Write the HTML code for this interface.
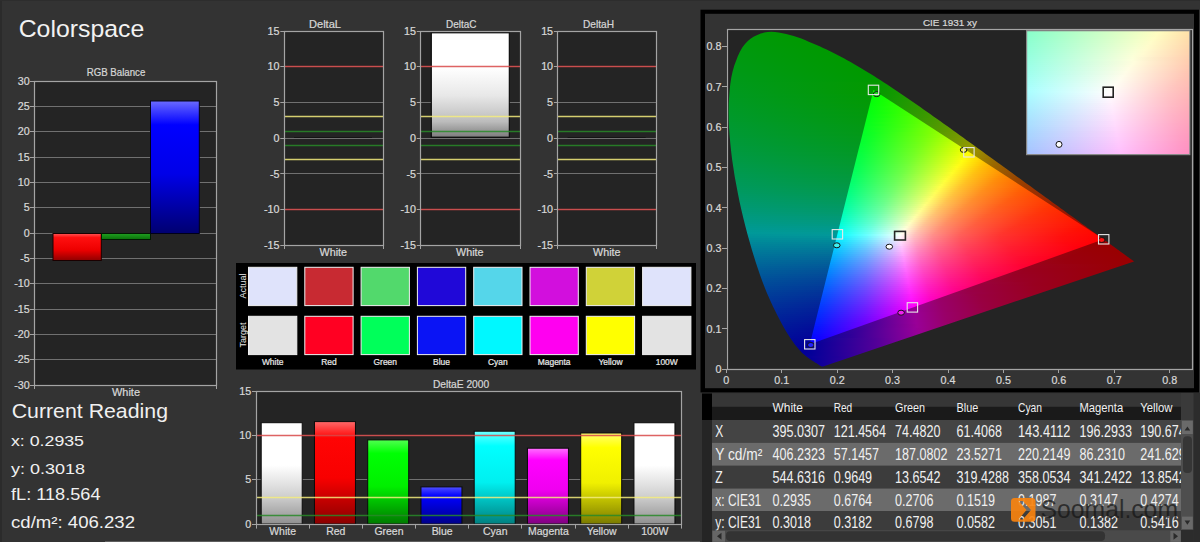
<!DOCTYPE html>
<html><head><meta charset="utf-8"><style>
html,body{margin:0;padding:0;background:#333333;width:1200px;height:542px;overflow:hidden;}
svg{position:absolute;left:0;top:0;font-family:"Liberation Sans", sans-serif;}
text{stroke:currentColor;stroke-width:0;}
.b text.s{stroke-width:0.22px;}
.g{position:absolute;}
.g i{position:absolute;display:block;}
</style></head><body>
<svg class="b" width="1200" height="542" viewBox="0 0 1200 542">
<rect x="0.00" y="0.00" width="2.00" height="542.00" fill="#2b2b2b" />
<rect x="0.00" y="0.00" width="1200.00" height="1.00" fill="#2d2d2d" />
<rect x="105.00" y="541.00" width="595.00" height="1.00" fill="#5e5e5e" />
<text x="18.70" y="37.30" font-size="24.71" fill="#f2f2f2" color="#f2f2f2" text-anchor="start" textLength="125.60" lengthAdjust="spacingAndGlyphs" >Colorspace</text>
<text class="s" x="86.70" y="76.30" font-size="10.17" fill="#d6d6d6" color="#d6d6d6" text-anchor="start" textLength="58.60" lengthAdjust="spacingAndGlyphs" >RGB Balance</text>
<rect x="34.50" y="81.00" width="182.00" height="304.00" fill="#242424" />
<line x1="30.00" y1="81.50" x2="34.50" y2="81.50" stroke="#a4a4a4" stroke-width="1" />
<text class="s" x="29.70" y="84.70" font-size="10.76" fill="#d8d8d8" color="#d8d8d8" text-anchor="end" >30</text>
<line x1="34.50" y1="106.50" x2="216.50" y2="106.50" stroke="#707070" stroke-width="1" />
<line x1="30.00" y1="106.50" x2="34.50" y2="106.50" stroke="#a4a4a4" stroke-width="1" />
<text class="s" x="29.70" y="110.03" font-size="10.76" fill="#d8d8d8" color="#d8d8d8" text-anchor="end" >25</text>
<line x1="34.50" y1="131.50" x2="216.50" y2="131.50" stroke="#707070" stroke-width="1" />
<line x1="30.00" y1="131.50" x2="34.50" y2="131.50" stroke="#a4a4a4" stroke-width="1" />
<text class="s" x="29.70" y="135.37" font-size="10.76" fill="#d8d8d8" color="#d8d8d8" text-anchor="end" >20</text>
<line x1="34.50" y1="157.50" x2="216.50" y2="157.50" stroke="#707070" stroke-width="1" />
<line x1="30.00" y1="157.50" x2="34.50" y2="157.50" stroke="#a4a4a4" stroke-width="1" />
<text class="s" x="29.70" y="160.70" font-size="10.76" fill="#d8d8d8" color="#d8d8d8" text-anchor="end" >15</text>
<line x1="34.50" y1="182.50" x2="216.50" y2="182.50" stroke="#707070" stroke-width="1" />
<line x1="30.00" y1="182.50" x2="34.50" y2="182.50" stroke="#a4a4a4" stroke-width="1" />
<text class="s" x="29.70" y="186.03" font-size="10.76" fill="#d8d8d8" color="#d8d8d8" text-anchor="end" >10</text>
<line x1="34.50" y1="207.50" x2="216.50" y2="207.50" stroke="#707070" stroke-width="1" />
<line x1="30.00" y1="207.50" x2="34.50" y2="207.50" stroke="#a4a4a4" stroke-width="1" />
<text class="s" x="29.70" y="211.37" font-size="10.76" fill="#d8d8d8" color="#d8d8d8" text-anchor="end" >5</text>
<line x1="34.50" y1="233.50" x2="216.50" y2="233.50" stroke="#707070" stroke-width="1" />
<line x1="30.00" y1="233.50" x2="34.50" y2="233.50" stroke="#a4a4a4" stroke-width="1" />
<text class="s" x="29.70" y="236.70" font-size="10.76" fill="#d8d8d8" color="#d8d8d8" text-anchor="end" >0</text>
<line x1="34.50" y1="258.50" x2="216.50" y2="258.50" stroke="#707070" stroke-width="1" />
<line x1="30.00" y1="258.50" x2="34.50" y2="258.50" stroke="#a4a4a4" stroke-width="1" />
<text class="s" x="29.70" y="262.03" font-size="10.76" fill="#d8d8d8" color="#d8d8d8" text-anchor="end" >-5</text>
<line x1="34.50" y1="283.50" x2="216.50" y2="283.50" stroke="#707070" stroke-width="1" />
<line x1="30.00" y1="283.50" x2="34.50" y2="283.50" stroke="#a4a4a4" stroke-width="1" />
<text class="s" x="29.70" y="287.37" font-size="10.76" fill="#d8d8d8" color="#d8d8d8" text-anchor="end" >-10</text>
<line x1="34.50" y1="309.50" x2="216.50" y2="309.50" stroke="#707070" stroke-width="1" />
<line x1="30.00" y1="309.50" x2="34.50" y2="309.50" stroke="#a4a4a4" stroke-width="1" />
<text class="s" x="29.70" y="312.70" font-size="10.76" fill="#d8d8d8" color="#d8d8d8" text-anchor="end" >-15</text>
<line x1="34.50" y1="334.50" x2="216.50" y2="334.50" stroke="#707070" stroke-width="1" />
<line x1="30.00" y1="334.50" x2="34.50" y2="334.50" stroke="#a4a4a4" stroke-width="1" />
<text class="s" x="29.70" y="338.03" font-size="10.76" fill="#d8d8d8" color="#d8d8d8" text-anchor="end" >-20</text>
<line x1="34.50" y1="359.50" x2="216.50" y2="359.50" stroke="#707070" stroke-width="1" />
<line x1="30.00" y1="359.50" x2="34.50" y2="359.50" stroke="#a4a4a4" stroke-width="1" />
<text class="s" x="29.70" y="363.37" font-size="10.76" fill="#d8d8d8" color="#d8d8d8" text-anchor="end" >-25</text>
<line x1="30.00" y1="385.50" x2="34.50" y2="385.50" stroke="#a4a4a4" stroke-width="1" />
<text class="s" x="29.70" y="388.70" font-size="10.76" fill="#d8d8d8" color="#d8d8d8" text-anchor="end" >-30</text>
<linearGradient id="gR" x1="0" y1="0" x2="0" y2="1"><stop offset="0" stop-color="#ff5555"/><stop offset="0.15" stop-color="#ff1010"/><stop offset="0.6" stop-color="#ee0000"/><stop offset="1" stop-color="#900000"/></linearGradient>
<linearGradient id="gG" x1="0" y1="0" x2="0" y2="1"><stop offset="0" stop-color="#20a020"/><stop offset="1" stop-color="#0a700a"/></linearGradient>
<linearGradient id="gB" x1="0" y1="0" x2="0" y2="1"><stop offset="0" stop-color="#6a6aff"/><stop offset="0.18" stop-color="#0000ff"/><stop offset="0.55" stop-color="#0000e8"/><stop offset="1" stop-color="#000070"/></linearGradient>
<rect x="53.00" y="233.50" width="48.30" height="27.00" fill="url(#gR)" stroke="#1a0000" stroke-width="1"/>
<rect x="101.50" y="233.50" width="49.00" height="6.00" fill="url(#gG)" stroke="#001a00" stroke-width="1"/>
<rect x="150.50" y="101.00" width="48.80" height="132.50" fill="url(#gB)" stroke="#00001a" stroke-width="1"/>
<rect x="34.5" y="81.5" width="182.0" height="304.0" fill="none" stroke="#a4a4a4" stroke-width="1.2"/>
<line x1="34.50" y1="385.00" x2="34.50" y2="389.00" stroke="#a4a4a4" stroke-width="1" />
<line x1="216.50" y1="385.00" x2="216.50" y2="389.00" stroke="#a4a4a4" stroke-width="1" />
<text class="s" x="112.00" y="395.50" font-size="10.90" fill="#d8d8d8" color="#d8d8d8" text-anchor="start" textLength="28.00" lengthAdjust="spacingAndGlyphs" >White</text>
<text x="11.70" y="418.25" font-size="19.62" fill="#f0f0f0" color="#f0f0f0" text-anchor="start" textLength="156.30" lengthAdjust="spacingAndGlyphs" >Current Reading</text>
<text x="11.00" y="446.00" font-size="15.26" fill="#f0f0f0" color="#f0f0f0" text-anchor="start" textLength="73.00" lengthAdjust="spacingAndGlyphs" >x: 0.2935</text>
<text x="11.00" y="473.75" font-size="15.26" fill="#f0f0f0" color="#f0f0f0" text-anchor="start" textLength="74.00" lengthAdjust="spacingAndGlyphs" >y: 0.3018</text>
<text x="11.00" y="500.00" font-size="15.70" fill="#f0f0f0" color="#f0f0f0" text-anchor="start" textLength="89.50" lengthAdjust="spacingAndGlyphs" >fL: 118.564</text>
<text x="11.00" y="527.75" font-size="15.70" fill="#f0f0f0" color="#f0f0f0" text-anchor="start" textLength="124.00" lengthAdjust="spacingAndGlyphs" >cd/m²: 406.232</text>
<rect x="284.30" y="31.00" width="98.70" height="214.40" fill="#242424" />
<line x1="280.30" y1="31.50" x2="284.30" y2="31.50" stroke="#a4a4a4" stroke-width="1" />
<text class="s" x="279.50" y="34.70" font-size="10.76" fill="#d8d8d8" color="#d8d8d8" text-anchor="end" >15</text>
<line x1="284.30" y1="66.50" x2="383.00" y2="66.50" stroke="#707070" stroke-width="1" />
<line x1="280.30" y1="66.50" x2="284.30" y2="66.50" stroke="#a4a4a4" stroke-width="1" />
<text class="s" x="279.50" y="70.43" font-size="10.76" fill="#d8d8d8" color="#d8d8d8" text-anchor="end" >10</text>
<line x1="284.30" y1="102.50" x2="383.00" y2="102.50" stroke="#707070" stroke-width="1" />
<line x1="280.30" y1="102.50" x2="284.30" y2="102.50" stroke="#a4a4a4" stroke-width="1" />
<text class="s" x="279.50" y="106.17" font-size="10.76" fill="#d8d8d8" color="#d8d8d8" text-anchor="end" >5</text>
<line x1="284.30" y1="138.50" x2="383.00" y2="138.50" stroke="#707070" stroke-width="1" />
<line x1="280.30" y1="138.50" x2="284.30" y2="138.50" stroke="#a4a4a4" stroke-width="1" />
<text class="s" x="279.50" y="141.90" font-size="10.76" fill="#d8d8d8" color="#d8d8d8" text-anchor="end" >0</text>
<line x1="284.30" y1="173.50" x2="383.00" y2="173.50" stroke="#707070" stroke-width="1" />
<line x1="280.30" y1="173.50" x2="284.30" y2="173.50" stroke="#a4a4a4" stroke-width="1" />
<text class="s" x="279.50" y="177.63" font-size="10.76" fill="#d8d8d8" color="#d8d8d8" text-anchor="end" >-5</text>
<line x1="284.30" y1="209.50" x2="383.00" y2="209.50" stroke="#707070" stroke-width="1" />
<line x1="280.30" y1="209.50" x2="284.30" y2="209.50" stroke="#a4a4a4" stroke-width="1" />
<text class="s" x="279.50" y="213.37" font-size="10.76" fill="#d8d8d8" color="#d8d8d8" text-anchor="end" >-10</text>
<line x1="280.30" y1="245.50" x2="284.30" y2="245.50" stroke="#a4a4a4" stroke-width="1" />
<text class="s" x="279.50" y="249.10" font-size="10.76" fill="#d8d8d8" color="#d8d8d8" text-anchor="end" >-15</text>
<text class="s" x="309.00" y="27.70" font-size="10.17" fill="#d6d6d6" color="#d6d6d6" text-anchor="start" textLength="32.00" lengthAdjust="spacingAndGlyphs" >DeltaL</text>
<text class="s" x="319.50" y="255.50" font-size="10.47" fill="#d8d8d8" color="#d8d8d8" text-anchor="start" textLength="27.50" lengthAdjust="spacingAndGlyphs" >White</text>
<line x1="294.00" y1="137.50" x2="372.00" y2="137.50" stroke="#141414" stroke-width="1" />
<line x1="284.30" y1="66.50" x2="383.00" y2="66.50" stroke="#d84848" stroke-width="1.3" stroke-opacity="0.85"/>
<line x1="284.30" y1="209.50" x2="383.00" y2="209.50" stroke="#d84848" stroke-width="1.3" stroke-opacity="0.85"/>
<line x1="284.30" y1="116.50" x2="383.00" y2="116.50" stroke="#f4ec7c" stroke-width="1.3" stroke-opacity="0.85"/>
<line x1="284.30" y1="159.50" x2="383.00" y2="159.50" stroke="#f4ec7c" stroke-width="1.3" stroke-opacity="0.85"/>
<line x1="284.30" y1="131.50" x2="383.00" y2="131.50" stroke="#288a28" stroke-width="1.3" stroke-opacity="0.85"/>
<line x1="284.30" y1="145.50" x2="383.00" y2="145.50" stroke="#288a28" stroke-width="1.3" stroke-opacity="0.85"/>
<rect x="284.5" y="31.5" width="99.0" height="214.0" fill="none" stroke="#a4a4a4" stroke-width="1.2"/>
<line x1="284.50" y1="245.40" x2="284.50" y2="249.00" stroke="#a4a4a4" stroke-width="1" />
<line x1="383.50" y1="245.40" x2="383.50" y2="249.00" stroke="#a4a4a4" stroke-width="1" />
<rect x="420.80" y="31.00" width="99.20" height="214.40" fill="#242424" />
<line x1="416.80" y1="31.50" x2="420.80" y2="31.50" stroke="#a4a4a4" stroke-width="1" />
<text class="s" x="416.00" y="34.70" font-size="10.76" fill="#d8d8d8" color="#d8d8d8" text-anchor="end" >15</text>
<line x1="420.80" y1="66.50" x2="520.00" y2="66.50" stroke="#707070" stroke-width="1" />
<line x1="416.80" y1="66.50" x2="420.80" y2="66.50" stroke="#a4a4a4" stroke-width="1" />
<text class="s" x="416.00" y="70.43" font-size="10.76" fill="#d8d8d8" color="#d8d8d8" text-anchor="end" >10</text>
<line x1="420.80" y1="102.50" x2="520.00" y2="102.50" stroke="#707070" stroke-width="1" />
<line x1="416.80" y1="102.50" x2="420.80" y2="102.50" stroke="#a4a4a4" stroke-width="1" />
<text class="s" x="416.00" y="106.17" font-size="10.76" fill="#d8d8d8" color="#d8d8d8" text-anchor="end" >5</text>
<line x1="420.80" y1="138.50" x2="520.00" y2="138.50" stroke="#707070" stroke-width="1" />
<line x1="416.80" y1="138.50" x2="420.80" y2="138.50" stroke="#a4a4a4" stroke-width="1" />
<text class="s" x="416.00" y="141.90" font-size="10.76" fill="#d8d8d8" color="#d8d8d8" text-anchor="end" >0</text>
<line x1="420.80" y1="173.50" x2="520.00" y2="173.50" stroke="#707070" stroke-width="1" />
<line x1="416.80" y1="173.50" x2="420.80" y2="173.50" stroke="#a4a4a4" stroke-width="1" />
<text class="s" x="416.00" y="177.63" font-size="10.76" fill="#d8d8d8" color="#d8d8d8" text-anchor="end" >-5</text>
<line x1="420.80" y1="209.50" x2="520.00" y2="209.50" stroke="#707070" stroke-width="1" />
<line x1="416.80" y1="209.50" x2="420.80" y2="209.50" stroke="#a4a4a4" stroke-width="1" />
<text class="s" x="416.00" y="213.37" font-size="10.76" fill="#d8d8d8" color="#d8d8d8" text-anchor="end" >-10</text>
<line x1="416.80" y1="245.50" x2="420.80" y2="245.50" stroke="#a4a4a4" stroke-width="1" />
<text class="s" x="416.00" y="249.10" font-size="10.76" fill="#d8d8d8" color="#d8d8d8" text-anchor="end" >-15</text>
<text class="s" x="446.00" y="27.70" font-size="10.17" fill="#d6d6d6" color="#d6d6d6" text-anchor="start" textLength="30.40" lengthAdjust="spacingAndGlyphs" >DeltaC</text>
<text class="s" x="456.00" y="255.50" font-size="10.47" fill="#d8d8d8" color="#d8d8d8" text-anchor="start" textLength="27.50" lengthAdjust="spacingAndGlyphs" >White</text>
<linearGradient id="gW" x1="0" y1="0" x2="0" y2="1"><stop offset="0" stop-color="#ffffff"/><stop offset="0.33" stop-color="#ffffff"/><stop offset="0.6" stop-color="#e8e8e8"/><stop offset="0.85" stop-color="#bcbcbc"/><stop offset="1" stop-color="#7c7c7c"/></linearGradient>
<rect x="431.30" y="32.80" width="78.00" height="104.40" fill="url(#gW)" stroke="#050505" stroke-width="1.1"/>
<line x1="420.80" y1="66.50" x2="520.00" y2="66.50" stroke="#d84848" stroke-width="1.3" stroke-opacity="0.85"/>
<line x1="420.80" y1="209.50" x2="520.00" y2="209.50" stroke="#d84848" stroke-width="1.3" stroke-opacity="0.85"/>
<line x1="420.80" y1="116.50" x2="520.00" y2="116.50" stroke="#f4ec7c" stroke-width="1.3" stroke-opacity="0.85"/>
<line x1="420.80" y1="159.50" x2="520.00" y2="159.50" stroke="#f4ec7c" stroke-width="1.3" stroke-opacity="0.85"/>
<line x1="420.80" y1="131.50" x2="520.00" y2="131.50" stroke="#288a28" stroke-width="1.3" stroke-opacity="0.85"/>
<line x1="420.80" y1="145.50" x2="520.00" y2="145.50" stroke="#288a28" stroke-width="1.3" stroke-opacity="0.85"/>
<rect x="420.5" y="31.5" width="100.0" height="214.0" fill="none" stroke="#a4a4a4" stroke-width="1.2"/>
<line x1="420.50" y1="245.40" x2="420.50" y2="249.00" stroke="#a4a4a4" stroke-width="1" />
<line x1="520.50" y1="245.40" x2="520.50" y2="249.00" stroke="#a4a4a4" stroke-width="1" />
<rect x="557.90" y="31.00" width="98.90" height="214.40" fill="#242424" />
<line x1="553.90" y1="31.50" x2="557.90" y2="31.50" stroke="#a4a4a4" stroke-width="1" />
<text class="s" x="553.10" y="34.70" font-size="10.76" fill="#d8d8d8" color="#d8d8d8" text-anchor="end" >15</text>
<line x1="557.90" y1="66.50" x2="656.80" y2="66.50" stroke="#707070" stroke-width="1" />
<line x1="553.90" y1="66.50" x2="557.90" y2="66.50" stroke="#a4a4a4" stroke-width="1" />
<text class="s" x="553.10" y="70.43" font-size="10.76" fill="#d8d8d8" color="#d8d8d8" text-anchor="end" >10</text>
<line x1="557.90" y1="102.50" x2="656.80" y2="102.50" stroke="#707070" stroke-width="1" />
<line x1="553.90" y1="102.50" x2="557.90" y2="102.50" stroke="#a4a4a4" stroke-width="1" />
<text class="s" x="553.10" y="106.17" font-size="10.76" fill="#d8d8d8" color="#d8d8d8" text-anchor="end" >5</text>
<line x1="557.90" y1="138.50" x2="656.80" y2="138.50" stroke="#707070" stroke-width="1" />
<line x1="553.90" y1="138.50" x2="557.90" y2="138.50" stroke="#a4a4a4" stroke-width="1" />
<text class="s" x="553.10" y="141.90" font-size="10.76" fill="#d8d8d8" color="#d8d8d8" text-anchor="end" >0</text>
<line x1="557.90" y1="173.50" x2="656.80" y2="173.50" stroke="#707070" stroke-width="1" />
<line x1="553.90" y1="173.50" x2="557.90" y2="173.50" stroke="#a4a4a4" stroke-width="1" />
<text class="s" x="553.10" y="177.63" font-size="10.76" fill="#d8d8d8" color="#d8d8d8" text-anchor="end" >-5</text>
<line x1="557.90" y1="209.50" x2="656.80" y2="209.50" stroke="#707070" stroke-width="1" />
<line x1="553.90" y1="209.50" x2="557.90" y2="209.50" stroke="#a4a4a4" stroke-width="1" />
<text class="s" x="553.10" y="213.37" font-size="10.76" fill="#d8d8d8" color="#d8d8d8" text-anchor="end" >-10</text>
<line x1="553.90" y1="245.50" x2="557.90" y2="245.50" stroke="#a4a4a4" stroke-width="1" />
<text class="s" x="553.10" y="249.10" font-size="10.76" fill="#d8d8d8" color="#d8d8d8" text-anchor="end" >-15</text>
<text class="s" x="583.00" y="27.70" font-size="10.17" fill="#d6d6d6" color="#d6d6d6" text-anchor="start" textLength="31.00" lengthAdjust="spacingAndGlyphs" >DeltaH</text>
<text class="s" x="593.00" y="255.50" font-size="10.47" fill="#d8d8d8" color="#d8d8d8" text-anchor="start" textLength="27.50" lengthAdjust="spacingAndGlyphs" >White</text>
<line x1="567.60" y1="137.50" x2="645.60" y2="137.50" stroke="#141414" stroke-width="1" />
<line x1="557.90" y1="66.50" x2="656.80" y2="66.50" stroke="#d84848" stroke-width="1.3" stroke-opacity="0.85"/>
<line x1="557.90" y1="209.50" x2="656.80" y2="209.50" stroke="#d84848" stroke-width="1.3" stroke-opacity="0.85"/>
<line x1="557.90" y1="116.50" x2="656.80" y2="116.50" stroke="#f4ec7c" stroke-width="1.3" stroke-opacity="0.85"/>
<line x1="557.90" y1="159.50" x2="656.80" y2="159.50" stroke="#f4ec7c" stroke-width="1.3" stroke-opacity="0.85"/>
<line x1="557.90" y1="131.50" x2="656.80" y2="131.50" stroke="#288a28" stroke-width="1.3" stroke-opacity="0.85"/>
<line x1="557.90" y1="145.50" x2="656.80" y2="145.50" stroke="#288a28" stroke-width="1.3" stroke-opacity="0.85"/>
<rect x="557.5" y="31.5" width="99.0" height="214.0" fill="none" stroke="#a4a4a4" stroke-width="1.2"/>
<line x1="557.50" y1="245.40" x2="557.50" y2="249.00" stroke="#a4a4a4" stroke-width="1" />
<line x1="656.50" y1="245.40" x2="656.50" y2="249.00" stroke="#a4a4a4" stroke-width="1" />
<rect x="236.00" y="263.00" width="460.00" height="106.50" fill="#000000" />
<rect x="248.50" y="267.30" width="48.30" height="38.30" fill="#dfe3fb" stroke="#f0f0f0" stroke-width="1"/>
<rect x="248.50" y="316.30" width="48.30" height="38.30" fill="#e3e3e3" stroke="#f0f0f0" stroke-width="1"/>
<text class="s" x="272.65" y="364.50" font-size="8.43" fill="#e8e8e8" color="#e8e8e8" text-anchor="middle" >White</text>
<rect x="304.80" y="267.30" width="48.30" height="38.30" fill="#c82a32" stroke="#f0f0f0" stroke-width="1"/>
<rect x="304.80" y="316.30" width="48.30" height="38.30" fill="#ff0022" stroke="#f0f0f0" stroke-width="1"/>
<text class="s" x="328.95" y="364.50" font-size="8.43" fill="#e8e8e8" color="#e8e8e8" text-anchor="middle" >Red</text>
<rect x="361.10" y="267.30" width="48.30" height="38.30" fill="#52d96c" stroke="#f0f0f0" stroke-width="1"/>
<rect x="361.10" y="316.30" width="48.30" height="38.30" fill="#00ff5a" stroke="#f0f0f0" stroke-width="1"/>
<text class="s" x="385.25" y="364.50" font-size="8.43" fill="#e8e8e8" color="#e8e8e8" text-anchor="middle" >Green</text>
<rect x="417.40" y="267.30" width="48.30" height="38.30" fill="#2008d8" stroke="#f0f0f0" stroke-width="1"/>
<rect x="417.40" y="316.30" width="48.30" height="38.30" fill="#0a14f5" stroke="#f0f0f0" stroke-width="1"/>
<text class="s" x="441.55" y="364.50" font-size="8.43" fill="#e8e8e8" color="#e8e8e8" text-anchor="middle" >Blue</text>
<rect x="473.70" y="267.30" width="48.30" height="38.30" fill="#55d6ea" stroke="#f0f0f0" stroke-width="1"/>
<rect x="473.70" y="316.30" width="48.30" height="38.30" fill="#00f8ff" stroke="#f0f0f0" stroke-width="1"/>
<text class="s" x="497.85" y="364.50" font-size="8.43" fill="#e8e8e8" color="#e8e8e8" text-anchor="middle" >Cyan</text>
<rect x="530.00" y="267.30" width="48.30" height="38.30" fill="#d20fdd" stroke="#f0f0f0" stroke-width="1"/>
<rect x="530.00" y="316.30" width="48.30" height="38.30" fill="#ff00f0" stroke="#f0f0f0" stroke-width="1"/>
<text class="s" x="554.15" y="364.50" font-size="8.43" fill="#e8e8e8" color="#e8e8e8" text-anchor="middle" >Magenta</text>
<rect x="586.30" y="267.30" width="48.30" height="38.30" fill="#d0d238" stroke="#f0f0f0" stroke-width="1"/>
<rect x="586.30" y="316.30" width="48.30" height="38.30" fill="#ffff00" stroke="#f0f0f0" stroke-width="1"/>
<text class="s" x="610.45" y="364.50" font-size="8.43" fill="#e8e8e8" color="#e8e8e8" text-anchor="middle" >Yellow</text>
<rect x="642.60" y="267.30" width="48.30" height="38.30" fill="#dfe3fb" stroke="#f0f0f0" stroke-width="1"/>
<rect x="642.60" y="316.30" width="48.30" height="38.30" fill="#e3e3e3" stroke="#f0f0f0" stroke-width="1"/>
<text class="s" x="666.75" y="364.50" font-size="8.43" fill="#e8e8e8" color="#e8e8e8" text-anchor="middle" >100W</text>
<text transform="translate(245.5,286) rotate(-90)" font-size="9" fill="#e8e8e8" text-anchor="middle">Actual</text>
<text transform="translate(245.5,335) rotate(-90)" font-size="9" fill="#e8e8e8" text-anchor="middle">Target</text>
<text class="s" x="432.90" y="387.80" font-size="10.17" fill="#d6d6d6" color="#d6d6d6" text-anchor="start" textLength="56.30" lengthAdjust="spacingAndGlyphs" >DeltaE 2000</text>
<rect x="256.00" y="391.30" width="425.40" height="132.70" fill="#242424" />
<line x1="252.00" y1="391.50" x2="256.00" y2="391.50" stroke="#a4a4a4" stroke-width="1" />
<text class="s" x="251.30" y="395.00" font-size="10.76" fill="#d8d8d8" color="#d8d8d8" text-anchor="end" >15</text>
<line x1="256.00" y1="435.50" x2="681.40" y2="435.50" stroke="#707070" stroke-width="1" />
<line x1="252.00" y1="435.50" x2="256.00" y2="435.50" stroke="#a4a4a4" stroke-width="1" />
<text class="s" x="251.30" y="439.23" font-size="10.76" fill="#d8d8d8" color="#d8d8d8" text-anchor="end" >10</text>
<line x1="256.00" y1="479.50" x2="681.40" y2="479.50" stroke="#707070" stroke-width="1" />
<line x1="252.00" y1="479.50" x2="256.00" y2="479.50" stroke="#a4a4a4" stroke-width="1" />
<text class="s" x="251.30" y="483.47" font-size="10.76" fill="#d8d8d8" color="#d8d8d8" text-anchor="end" >5</text>
<line x1="252.00" y1="524.50" x2="256.00" y2="524.50" stroke="#a4a4a4" stroke-width="1" />
<text class="s" x="251.30" y="527.70" font-size="10.76" fill="#d8d8d8" color="#d8d8d8" text-anchor="end" >0</text>
<linearGradient id="eW" x1="0" y1="0" x2="0" y2="1"><stop offset="0" stop-color="#ffffff"/><stop offset="0.42" stop-color="#ffffff"/><stop offset="0.72" stop-color="#d0d0d0"/><stop offset="1" stop-color="#909090"/></linearGradient>
<linearGradient id="eR" x1="0" y1="0" x2="0" y2="1"><stop offset="0" stop-color="#ff6a6a"/><stop offset="0.16" stop-color="#ff0404"/><stop offset="0.55" stop-color="#f80000"/><stop offset="1" stop-color="#8a0000"/></linearGradient>
<linearGradient id="eG" x1="0" y1="0" x2="0" y2="1"><stop offset="0" stop-color="#50ff50"/><stop offset="0.16" stop-color="#00ff04"/><stop offset="0.55" stop-color="#00f000"/><stop offset="1" stop-color="#007a00"/></linearGradient>
<linearGradient id="eB" x1="0" y1="0" x2="0" y2="1"><stop offset="0" stop-color="#5050ff"/><stop offset="0.25" stop-color="#0000ff"/><stop offset="1" stop-color="#000088"/></linearGradient>
<linearGradient id="eC" x1="0" y1="0" x2="0" y2="1"><stop offset="0" stop-color="#70ffff"/><stop offset="0.16" stop-color="#00ffff"/><stop offset="0.55" stop-color="#00f0f0"/><stop offset="1" stop-color="#008080"/></linearGradient>
<linearGradient id="eM" x1="0" y1="0" x2="0" y2="1"><stop offset="0" stop-color="#ff70ff"/><stop offset="0.16" stop-color="#ff00ff"/><stop offset="0.55" stop-color="#f000f0"/><stop offset="1" stop-color="#800080"/></linearGradient>
<linearGradient id="eY" x1="0" y1="0" x2="0" y2="1"><stop offset="0" stop-color="#ffff70"/><stop offset="0.16" stop-color="#ffff00"/><stop offset="0.55" stop-color="#f0f000"/><stop offset="1" stop-color="#7a7a00"/></linearGradient>
<rect x="261.20" y="422.70" width="41.00" height="101.30" fill="url(#eW)" stroke="#0a0a0a" stroke-width="1"/>
<text class="s" x="282.59" y="535.00" font-size="10.47" fill="#d8d8d8" color="#d8d8d8" text-anchor="middle" >White</text>
<rect x="314.45" y="421.60" width="41.00" height="102.40" fill="url(#eR)" stroke="#0a0a0a" stroke-width="1"/>
<text class="s" x="335.76" y="535.00" font-size="10.47" fill="#d8d8d8" color="#d8d8d8" text-anchor="middle" >Red</text>
<rect x="367.70" y="439.90" width="41.00" height="84.10" fill="url(#eG)" stroke="#0a0a0a" stroke-width="1"/>
<text class="s" x="388.94" y="535.00" font-size="10.47" fill="#d8d8d8" color="#d8d8d8" text-anchor="middle" >Green</text>
<rect x="420.95" y="486.90" width="41.00" height="37.10" fill="url(#eB)" stroke="#0a0a0a" stroke-width="1"/>
<text class="s" x="442.11" y="535.00" font-size="10.47" fill="#d8d8d8" color="#d8d8d8" text-anchor="middle" >Blue</text>
<rect x="474.20" y="431.20" width="41.00" height="92.80" fill="url(#eC)" stroke="#0a0a0a" stroke-width="1"/>
<text class="s" x="495.29" y="535.00" font-size="10.47" fill="#d8d8d8" color="#d8d8d8" text-anchor="middle" >Cyan</text>
<rect x="527.45" y="448.20" width="41.00" height="75.80" fill="url(#eM)" stroke="#0a0a0a" stroke-width="1"/>
<text class="s" x="548.46" y="535.00" font-size="10.47" fill="#d8d8d8" color="#d8d8d8" text-anchor="middle" >Magenta</text>
<rect x="580.70" y="433.00" width="41.00" height="91.00" fill="url(#eY)" stroke="#0a0a0a" stroke-width="1"/>
<text class="s" x="601.64" y="535.00" font-size="10.47" fill="#d8d8d8" color="#d8d8d8" text-anchor="middle" >Yellow</text>
<rect x="633.95" y="422.75" width="41.00" height="101.25" fill="url(#eW)" stroke="#0a0a0a" stroke-width="1"/>
<text class="s" x="654.81" y="535.00" font-size="10.47" fill="#d8d8d8" color="#d8d8d8" text-anchor="middle" >100W</text>
<line x1="256.00" y1="435.50" x2="681.40" y2="435.50" stroke="#d84848" stroke-width="1.3" stroke-opacity="0.85"/>
<line x1="256.00" y1="497.50" x2="681.40" y2="497.50" stroke="#f4ec7c" stroke-width="1.3" stroke-opacity="0.85"/>
<line x1="256.00" y1="515.50" x2="681.40" y2="515.50" stroke="#288a28" stroke-width="1.3" stroke-opacity="0.85"/>
<rect x="256.5" y="391.5" width="425.0" height="133.0" fill="none" stroke="#a4a4a4" stroke-width="1.2"/>
<line x1="256.50" y1="524.00" x2="256.50" y2="528.60" stroke="#a4a4a4" stroke-width="1" />
<line x1="309.50" y1="524.00" x2="309.50" y2="528.60" stroke="#a4a4a4" stroke-width="1" />
<line x1="362.50" y1="524.00" x2="362.50" y2="528.60" stroke="#a4a4a4" stroke-width="1" />
<line x1="415.50" y1="524.00" x2="415.50" y2="528.60" stroke="#a4a4a4" stroke-width="1" />
<line x1="468.50" y1="524.00" x2="468.50" y2="528.60" stroke="#a4a4a4" stroke-width="1" />
<line x1="521.50" y1="524.00" x2="521.50" y2="528.60" stroke="#a4a4a4" stroke-width="1" />
<line x1="575.50" y1="524.00" x2="575.50" y2="528.60" stroke="#a4a4a4" stroke-width="1" />
<line x1="628.50" y1="524.00" x2="628.50" y2="528.60" stroke="#a4a4a4" stroke-width="1" />
<line x1="681.50" y1="524.00" x2="681.50" y2="528.60" stroke="#a4a4a4" stroke-width="1" />
<rect x="700.50" y="9.70" width="498.50" height="382.70" fill="#000" />
<rect x="705.00" y="13.80" width="489.00" height="374.40" fill="#333333" />
<rect x="726.60" y="29.70" width="465.90" height="338.80" fill="#242424" />
<text class="s" x="922.90" y="26.25" font-size="9.74" fill="#d6d6d6" color="#d6d6d6" text-anchor="start" textLength="54.10" lengthAdjust="spacingAndGlyphs" >CIE 1931 xy</text>
<line x1="726.50" y1="369.00" x2="726.50" y2="373.00" stroke="#a4a4a4" stroke-width="1" />
<text class="s" x="726.30" y="383.70" font-size="10.76" fill="#d8d8d8" color="#d8d8d8" text-anchor="middle" >0</text>
<line x1="722.00" y1="369.50" x2="727.00" y2="369.50" stroke="#a4a4a4" stroke-width="1" />
<text class="s" x="721.50" y="372.90" font-size="10.76" fill="#d8d8d8" color="#d8d8d8" text-anchor="end" >0</text>
<line x1="781.50" y1="369.00" x2="781.50" y2="373.00" stroke="#a4a4a4" stroke-width="1" />
<text class="s" x="781.73" y="383.70" font-size="10.76" fill="#d8d8d8" color="#d8d8d8" text-anchor="middle" >0.1</text>
<line x1="722.00" y1="328.50" x2="727.00" y2="328.50" stroke="#a4a4a4" stroke-width="1" />
<text class="s" x="721.50" y="332.57" font-size="10.76" fill="#d8d8d8" color="#d8d8d8" text-anchor="end" >0.1</text>
<line x1="837.50" y1="369.00" x2="837.50" y2="373.00" stroke="#a4a4a4" stroke-width="1" />
<text class="s" x="837.16" y="383.70" font-size="10.76" fill="#d8d8d8" color="#d8d8d8" text-anchor="middle" >0.2</text>
<line x1="722.00" y1="288.50" x2="727.00" y2="288.50" stroke="#a4a4a4" stroke-width="1" />
<text class="s" x="721.50" y="292.24" font-size="10.76" fill="#d8d8d8" color="#d8d8d8" text-anchor="end" >0.2</text>
<line x1="892.50" y1="369.00" x2="892.50" y2="373.00" stroke="#a4a4a4" stroke-width="1" />
<text class="s" x="892.59" y="383.70" font-size="10.76" fill="#d8d8d8" color="#d8d8d8" text-anchor="middle" >0.3</text>
<line x1="722.00" y1="248.50" x2="727.00" y2="248.50" stroke="#a4a4a4" stroke-width="1" />
<text class="s" x="721.50" y="251.91" font-size="10.76" fill="#d8d8d8" color="#d8d8d8" text-anchor="end" >0.3</text>
<line x1="948.50" y1="369.00" x2="948.50" y2="373.00" stroke="#a4a4a4" stroke-width="1" />
<text class="s" x="948.02" y="383.70" font-size="10.76" fill="#d8d8d8" color="#d8d8d8" text-anchor="middle" >0.4</text>
<line x1="722.00" y1="207.50" x2="727.00" y2="207.50" stroke="#a4a4a4" stroke-width="1" />
<text class="s" x="721.50" y="211.58" font-size="10.76" fill="#d8d8d8" color="#d8d8d8" text-anchor="end" >0.4</text>
<line x1="1003.50" y1="369.00" x2="1003.50" y2="373.00" stroke="#a4a4a4" stroke-width="1" />
<text class="s" x="1003.45" y="383.70" font-size="10.76" fill="#d8d8d8" color="#d8d8d8" text-anchor="middle" >0.5</text>
<line x1="722.00" y1="167.50" x2="727.00" y2="167.50" stroke="#a4a4a4" stroke-width="1" />
<text class="s" x="721.50" y="171.25" font-size="10.76" fill="#d8d8d8" color="#d8d8d8" text-anchor="end" >0.5</text>
<line x1="1058.50" y1="369.00" x2="1058.50" y2="373.00" stroke="#a4a4a4" stroke-width="1" />
<text class="s" x="1058.88" y="383.70" font-size="10.76" fill="#d8d8d8" color="#d8d8d8" text-anchor="middle" >0.6</text>
<line x1="722.00" y1="127.50" x2="727.00" y2="127.50" stroke="#a4a4a4" stroke-width="1" />
<text class="s" x="721.50" y="130.92" font-size="10.76" fill="#d8d8d8" color="#d8d8d8" text-anchor="end" >0.6</text>
<line x1="1114.50" y1="369.00" x2="1114.50" y2="373.00" stroke="#a4a4a4" stroke-width="1" />
<text class="s" x="1114.31" y="383.70" font-size="10.76" fill="#d8d8d8" color="#d8d8d8" text-anchor="middle" >0.7</text>
<line x1="722.00" y1="86.50" x2="727.00" y2="86.50" stroke="#a4a4a4" stroke-width="1" />
<text class="s" x="721.50" y="90.59" font-size="10.76" fill="#d8d8d8" color="#d8d8d8" text-anchor="end" >0.7</text>
<line x1="1169.50" y1="369.00" x2="1169.50" y2="373.00" stroke="#a4a4a4" stroke-width="1" />
<text class="s" x="1169.74" y="383.70" font-size="10.76" fill="#d8d8d8" color="#d8d8d8" text-anchor="middle" >0.8</text>
<line x1="722.00" y1="46.50" x2="727.00" y2="46.50" stroke="#a4a4a4" stroke-width="1" />
<text class="s" x="721.50" y="50.26" font-size="10.76" fill="#d8d8d8" color="#d8d8d8" text-anchor="end" >0.8</text>
<rect x="727.5" y="29.5" width="465.0" height="340.0" fill="none" stroke="#a4a4a4" stroke-width="1.2"/>
<rect x="702.00" y="393.50" width="10.00" height="26.50" fill="#000"/>
<rect x="702.00" y="420.00" width="10.00" height="122.00" fill="#252525"/>
<rect x="712.00" y="393.50" width="469.00" height="13.30" fill="#363636"/>
<rect x="712.00" y="406.80" width="469.00" height="13.20" fill="#1a1a1a"/>
<rect x="712.00" y="420.00" width="469.00" height="22.80" fill="#444444"/>
<rect x="712.00" y="442.80" width="469.00" height="23.00" fill="#6b6b6b"/>
<rect x="712.00" y="465.80" width="469.00" height="22.70" fill="#3c3c3c"/>
<rect x="712.00" y="488.50" width="469.00" height="22.70" fill="#6b6b6b"/>
<rect x="712.00" y="511.20" width="469.00" height="23.30" fill="#3c3c3c"/>
<text x="772.50" y="412.10" font-size="12.79" fill="#f0f0f0" color="#f0f0f0" text-anchor="start" textLength="30.50" lengthAdjust="spacingAndGlyphs">White</text>
<text x="833.70" y="412.10" font-size="12.79" fill="#f0f0f0" color="#f0f0f0" text-anchor="start" textLength="18.50" lengthAdjust="spacingAndGlyphs">Red</text>
<text x="895.00" y="412.10" font-size="12.79" fill="#f0f0f0" color="#f0f0f0" text-anchor="start" textLength="30.00" lengthAdjust="spacingAndGlyphs">Green</text>
<text x="956.50" y="412.10" font-size="12.79" fill="#f0f0f0" color="#f0f0f0" text-anchor="start" textLength="21.75" lengthAdjust="spacingAndGlyphs">Blue</text>
<text x="1018.00" y="412.10" font-size="12.79" fill="#f0f0f0" color="#f0f0f0" text-anchor="start" textLength="24.00" lengthAdjust="spacingAndGlyphs">Cyan</text>
<text x="1079.50" y="412.10" font-size="12.79" fill="#f0f0f0" color="#f0f0f0" text-anchor="start" textLength="43.70" lengthAdjust="spacingAndGlyphs">Magenta</text>
<text x="1140.30" y="412.10" font-size="12.79" fill="#f0f0f0" color="#f0f0f0" text-anchor="start" textLength="32.20" lengthAdjust="spacingAndGlyphs">Yellow</text>
<text x="715.30" y="437.00" font-size="15.99" fill="#f0f0f0" color="#f0f0f0" text-anchor="start" textLength="8.00" lengthAdjust="spacingAndGlyphs">X</text>
<text x="772.50" y="437.00" font-size="15.99" fill="#f0f0f0" color="#f0f0f0" text-anchor="start" textLength="52.37" lengthAdjust="spacingAndGlyphs">395.0307</text>
<text x="833.70" y="437.00" font-size="15.99" fill="#f0f0f0" color="#f0f0f0" text-anchor="start" textLength="52.37" lengthAdjust="spacingAndGlyphs">121.4564</text>
<text x="895.00" y="437.00" font-size="15.99" fill="#f0f0f0" color="#f0f0f0" text-anchor="start" textLength="45.39" lengthAdjust="spacingAndGlyphs">74.4820</text>
<text x="956.50" y="437.00" font-size="15.99" fill="#f0f0f0" color="#f0f0f0" text-anchor="start" textLength="45.39" lengthAdjust="spacingAndGlyphs">61.4068</text>
<text x="1018.00" y="437.00" font-size="15.99" fill="#f0f0f0" color="#f0f0f0" text-anchor="start" textLength="52.37" lengthAdjust="spacingAndGlyphs">143.4112</text>
<text x="1079.50" y="437.00" font-size="15.99" fill="#f0f0f0" color="#f0f0f0" text-anchor="start" textLength="52.37" lengthAdjust="spacingAndGlyphs">196.2933</text>
<text x="1140.30" y="437.00" font-size="15.99" fill="#f0f0f0" color="#f0f0f0" text-anchor="start" textLength="52.37" lengthAdjust="spacingAndGlyphs">190.6744</text>
<text x="715.30" y="459.80" font-size="15.99" fill="#f0f0f0" color="#f0f0f0" text-anchor="start" textLength="47.00" lengthAdjust="spacingAndGlyphs">Y cd/m²</text>
<text x="772.50" y="459.80" font-size="15.99" fill="#f0f0f0" color="#f0f0f0" text-anchor="start" textLength="52.37" lengthAdjust="spacingAndGlyphs">406.2323</text>
<text x="833.70" y="459.80" font-size="15.99" fill="#f0f0f0" color="#f0f0f0" text-anchor="start" textLength="45.39" lengthAdjust="spacingAndGlyphs">57.1457</text>
<text x="895.00" y="459.80" font-size="15.99" fill="#f0f0f0" color="#f0f0f0" text-anchor="start" textLength="52.37" lengthAdjust="spacingAndGlyphs">187.0802</text>
<text x="956.50" y="459.80" font-size="15.99" fill="#f0f0f0" color="#f0f0f0" text-anchor="start" textLength="45.39" lengthAdjust="spacingAndGlyphs">23.5271</text>
<text x="1018.00" y="459.80" font-size="15.99" fill="#f0f0f0" color="#f0f0f0" text-anchor="start" textLength="52.37" lengthAdjust="spacingAndGlyphs">220.2149</text>
<text x="1079.50" y="459.80" font-size="15.99" fill="#f0f0f0" color="#f0f0f0" text-anchor="start" textLength="45.39" lengthAdjust="spacingAndGlyphs">86.2310</text>
<text x="1140.30" y="459.80" font-size="15.99" fill="#f0f0f0" color="#f0f0f0" text-anchor="start" textLength="52.37" lengthAdjust="spacingAndGlyphs">241.6295</text>
<text x="715.30" y="482.80" font-size="15.99" fill="#f0f0f0" color="#f0f0f0" text-anchor="start" textLength="7.50" lengthAdjust="spacingAndGlyphs">Z</text>
<text x="772.50" y="482.80" font-size="15.99" fill="#f0f0f0" color="#f0f0f0" text-anchor="start" textLength="52.37" lengthAdjust="spacingAndGlyphs">544.6316</text>
<text x="833.70" y="482.80" font-size="15.99" fill="#f0f0f0" color="#f0f0f0" text-anchor="start" textLength="38.41" lengthAdjust="spacingAndGlyphs">0.9649</text>
<text x="895.00" y="482.80" font-size="15.99" fill="#f0f0f0" color="#f0f0f0" text-anchor="start" textLength="45.39" lengthAdjust="spacingAndGlyphs">13.6542</text>
<text x="956.50" y="482.80" font-size="15.99" fill="#f0f0f0" color="#f0f0f0" text-anchor="start" textLength="52.37" lengthAdjust="spacingAndGlyphs">319.4288</text>
<text x="1018.00" y="482.80" font-size="15.99" fill="#f0f0f0" color="#f0f0f0" text-anchor="start" textLength="52.37" lengthAdjust="spacingAndGlyphs">358.0534</text>
<text x="1079.50" y="482.80" font-size="15.99" fill="#f0f0f0" color="#f0f0f0" text-anchor="start" textLength="52.37" lengthAdjust="spacingAndGlyphs">341.2422</text>
<text x="1140.30" y="482.80" font-size="15.99" fill="#f0f0f0" color="#f0f0f0" text-anchor="start" textLength="45.39" lengthAdjust="spacingAndGlyphs">13.8542</text>
<text x="715.30" y="505.50" font-size="15.99" fill="#f0f0f0" color="#f0f0f0" text-anchor="start" textLength="46.00" lengthAdjust="spacingAndGlyphs">x: CIE31</text>
<text x="772.50" y="505.50" font-size="15.99" fill="#f0f0f0" color="#f0f0f0" text-anchor="start" textLength="38.41" lengthAdjust="spacingAndGlyphs">0.2935</text>
<text x="833.70" y="505.50" font-size="15.99" fill="#f0f0f0" color="#f0f0f0" text-anchor="start" textLength="38.41" lengthAdjust="spacingAndGlyphs">0.6764</text>
<text x="895.00" y="505.50" font-size="15.99" fill="#f0f0f0" color="#f0f0f0" text-anchor="start" textLength="38.41" lengthAdjust="spacingAndGlyphs">0.2706</text>
<text x="956.50" y="505.50" font-size="15.99" fill="#f0f0f0" color="#f0f0f0" text-anchor="start" textLength="38.41" lengthAdjust="spacingAndGlyphs">0.1519</text>
<text x="1018.00" y="505.50" font-size="15.99" fill="#f0f0f0" color="#f0f0f0" text-anchor="start" textLength="38.41" lengthAdjust="spacingAndGlyphs">0.1987</text>
<text x="1079.50" y="505.50" font-size="15.99" fill="#f0f0f0" color="#f0f0f0" text-anchor="start" textLength="38.41" lengthAdjust="spacingAndGlyphs">0.3147</text>
<text x="1140.30" y="505.50" font-size="15.99" fill="#f0f0f0" color="#f0f0f0" text-anchor="start" textLength="38.41" lengthAdjust="spacingAndGlyphs">0.4274</text>
<text x="715.30" y="528.20" font-size="15.99" fill="#f0f0f0" color="#f0f0f0" text-anchor="start" textLength="46.00" lengthAdjust="spacingAndGlyphs">y: CIE31</text>
<text x="772.50" y="528.20" font-size="15.99" fill="#f0f0f0" color="#f0f0f0" text-anchor="start" textLength="38.41" lengthAdjust="spacingAndGlyphs">0.3018</text>
<text x="833.70" y="528.20" font-size="15.99" fill="#f0f0f0" color="#f0f0f0" text-anchor="start" textLength="38.41" lengthAdjust="spacingAndGlyphs">0.3182</text>
<text x="895.00" y="528.20" font-size="15.99" fill="#f0f0f0" color="#f0f0f0" text-anchor="start" textLength="38.41" lengthAdjust="spacingAndGlyphs">0.6798</text>
<text x="956.50" y="528.20" font-size="15.99" fill="#f0f0f0" color="#f0f0f0" text-anchor="start" textLength="38.41" lengthAdjust="spacingAndGlyphs">0.0582</text>
<text x="1018.00" y="528.20" font-size="15.99" fill="#f0f0f0" color="#f0f0f0" text-anchor="start" textLength="38.41" lengthAdjust="spacingAndGlyphs">0.3051</text>
<text x="1079.50" y="528.20" font-size="15.99" fill="#f0f0f0" color="#f0f0f0" text-anchor="start" textLength="38.41" lengthAdjust="spacingAndGlyphs">0.1382</text>
<text x="1140.30" y="528.20" font-size="15.99" fill="#f0f0f0" color="#f0f0f0" text-anchor="start" textLength="38.41" lengthAdjust="spacingAndGlyphs">0.5416</text>
<rect x="1181" y="393" width="19" height="27" fill="#3a3a3a"/>
<rect x="1181" y="420" width="12.5" height="110" fill="#4e4e4e"/>
<rect x="1193.5" y="393" width="6.5" height="149" fill="#2c2c2c"/>
<rect x="1181" y="530" width="12.5" height="12" fill="#2c2c2c"/>
<rect x="1182" y="420.8" width="10.8" height="13.2" fill="#6a6a6a"/>
<path d="M1184.6,430.6 L1187.4,426.4 L1190.2,430.6 Z" fill="#2a2a2a"/>
<rect x="1183" y="436.2" width="9" height="36.8" rx="4" fill="#363636"/>
<rect x="1182" y="516.6" width="10.8" height="12.4" fill="#6a6a6a"/>
<path d="M1184.6,520.6 L1187.4,524.8 L1190.2,520.6 Z" fill="#2a2a2a"/>
<rect x="712" y="530.3" width="469" height="11.7" fill="#4a4a4a"/>
<rect x="726" y="531.3" width="379" height="9.7" rx="4" fill="#333333"/>
<rect x="712.5" y="530.8" width="12.5" height="11" fill="#666"/>
<path d="M721.5,532.8 L717,536.3 L721.5,539.8 Z" fill="#2a2a2a"/>
<rect x="1170.3" y="530.8" width="10.5" height="11" fill="#666"/>
<path d="M1173.5,532.8 L1178,536.3 L1173.5,539.8 Z" fill="#2a2a2a"/>
</svg>
<div class="g" style="left:720px;top:25px;width:430px;height:350px;clip-path:path('M 103.1,341.5 L 103.1,341.5 L 103.1,341.5 L 103.1,341.5 L 103.1,341.5 L 103.1,341.5 L 103.1,341.5 L 103.1,341.5 L 103.1,341.5 L 103.0,341.5 L 103.0,341.5 L 103.0,341.5 L 103.0,341.5 L 103.0,341.5 L 102.9,341.5 L 102.9,341.5 L 102.9,341.5 L 102.9,341.5 L 102.8,341.5 L 102.8,341.5 L 102.8,341.5 L 102.8,341.5 L 102.8,341.5 L 102.7,341.6 L 102.7,341.6 L 102.7,341.6 L 102.7,341.6 L 102.6,341.6 L 102.6,341.6 L 102.6,341.6 L 102.5,341.6 L 102.5,341.6 L 102.5,341.6 L 102.4,341.6 L 102.4,341.6 L 102.3,341.6 L 102.3,341.6 L 102.3,341.6 L 102.2,341.6 L 102.2,341.6 L 102.1,341.6 L 102.1,341.6 L 102.0,341.6 L 102.0,341.5 L 101.9,341.5 L 101.8,341.5 L 101.8,341.5 L 101.7,341.5 L 101.6,341.4 L 101.6,341.4 L 101.5,341.4 L 101.4,341.3 L 101.2,341.3 L 101.1,341.2 L 101.0,341.2 L 100.9,341.1 L 100.8,341.0 L 100.6,341.0 L 100.5,340.9 L 100.4,340.8 L 100.2,340.7 L 100.1,340.6 L 99.9,340.5 L 99.7,340.4 L 99.5,340.3 L 99.3,340.2 L 99.1,340.0 L 98.9,339.9 L 98.7,339.8 L 98.5,339.6 L 98.2,339.4 L 98.0,339.3 L 97.8,339.1 L 97.5,338.9 L 97.2,338.7 L 96.9,338.5 L 96.6,338.3 L 96.3,338.1 L 95.9,337.9 L 95.5,337.7 L 95.1,337.4 L 94.7,337.2 L 94.3,336.9 L 93.9,336.6 L 93.5,336.4 L 93.0,336.0 L 92.4,335.7 L 91.9,335.4 L 91.4,335.0 L 90.9,334.7 L 90.3,334.3 L 89.7,333.9 L 89.1,333.4 L 88.4,333.0 L 87.7,332.5 L 87.1,332.0 L 86.4,331.5 L 85.7,330.9 L 84.9,330.3 L 84.1,329.6 L 83.3,328.9 L 82.5,328.2 L 81.7,327.4 L 80.7,326.3 L 79.7,325.2 L 78.6,324.1 L 77.6,322.8 L 76.5,321.5 L 75.4,320.2 L 74.1,318.4 L 72.8,316.6 L 71.4,314.7 L 70.1,312.7 L 68.7,310.6 L 67.4,308.4 L 65.7,305.7 L 64.0,302.7 L 62.3,299.7 L 60.6,296.6 L 58.9,293.3 L 57.2,289.9 L 55.1,285.7 L 53.0,281.4 L 50.9,276.9 L 48.8,272.2 L 46.7,267.4 L 44.7,262.5 L 42.4,256.6 L 40.2,250.4 L 38.0,244.1 L 35.9,237.7 L 33.8,231.1 L 31.8,224.4 L 29.6,216.8 L 27.4,209.1 L 25.3,201.1 L 23.3,193.1 L 21.4,185.0 L 19.6,176.9 L 17.9,168.5 L 16.3,160.1 L 14.7,151.5 L 13.4,143.0 L 12.1,134.5 L 11.1,126.1 L 10.3,118.2 L 9.6,110.2 L 9.0,102.2 L 8.7,94.4 L 8.6,86.7 L 8.7,79.1 L 9.1,72.4 L 9.6,65.7 L 10.3,59.1 L 11.3,52.6 L 12.6,46.5 L 14.3,40.6 L 16.0,35.9 L 17.8,31.3 L 19.9,26.8 L 22.3,22.6 L 25.0,18.9 L 28.1,15.7 L 30.9,13.5 L 34.0,11.6 L 37.3,9.9 L 40.8,8.6 L 44.3,7.6 L 47.8,6.9 L 51.3,6.7 L 55.0,6.9 L 58.7,7.4 L 62.5,8.2 L 66.2,9.0 L 69.9,10.0 L 73.7,11.0 L 77.5,12.3 L 81.3,13.6 L 85.0,15.1 L 88.7,16.7 L 92.4,18.2 L 96.0,19.7 L 99.6,21.3 L 103.1,22.9 L 106.6,24.6 L 110.1,26.2 L 113.6,28.0 L 117.0,29.7 L 120.4,31.5 L 123.8,33.3 L 127.2,35.2 L 130.6,37.1 L 133.9,39.0 L 137.3,40.9 L 140.7,42.9 L 144.0,44.9 L 147.3,47.0 L 150.7,49.0 L 154.0,51.1 L 157.3,53.2 L 160.6,55.3 L 163.9,57.5 L 167.2,59.6 L 170.5,61.8 L 173.8,64.0 L 177.2,66.2 L 180.5,68.5 L 183.8,70.7 L 187.1,73.0 L 190.4,75.2 L 193.7,77.5 L 197.0,79.8 L 200.3,82.1 L 203.6,84.4 L 206.9,86.8 L 210.2,89.1 L 213.5,91.4 L 216.8,93.7 L 220.1,96.1 L 223.4,98.4 L 226.7,100.8 L 230.0,103.1 L 233.2,105.5 L 236.5,107.8 L 239.8,110.2 L 243.1,112.5 L 246.3,114.9 L 249.6,117.2 L 252.8,119.6 L 256.1,121.9 L 259.3,124.2 L 262.5,126.5 L 265.7,128.9 L 268.9,131.2 L 272.1,133.5 L 275.2,135.8 L 278.3,138.0 L 281.5,140.3 L 284.6,142.6 L 287.7,144.8 L 290.8,147.1 L 293.8,149.2 L 296.8,151.4 L 299.8,153.6 L 302.8,155.8 L 305.7,157.9 L 308.7,160.0 L 311.5,162.1 L 314.4,164.2 L 317.2,166.2 L 320.0,168.2 L 322.8,170.2 L 325.5,172.2 L 328.1,174.1 L 330.7,176.0 L 333.3,177.9 L 335.9,179.8 L 338.4,181.6 L 340.9,183.4 L 343.2,185.1 L 345.5,186.7 L 347.7,188.4 L 349.9,190.0 L 352.1,191.6 L 354.3,193.1 L 356.3,194.6 L 358.3,196.0 L 360.3,197.5 L 362.2,198.9 L 364.2,200.3 L 366.0,201.6 L 367.7,202.9 L 369.4,204.1 L 371.0,205.2 L 372.6,206.4 L 374.2,207.5 L 375.8,208.7 L 377.1,209.7 L 378.5,210.6 L 379.8,211.6 L 381.2,212.6 L 382.4,213.5 L 383.7,214.4 L 384.8,215.2 L 385.9,216.0 L 387.0,216.8 L 388.0,217.5 L 389.0,218.3 L 390.0,219.0 L 390.9,219.7 L 391.8,220.3 L 392.6,220.9 L 393.5,221.5 L 394.3,222.1 L 395.1,222.7 L 395.8,223.2 L 396.5,223.7 L 397.2,224.2 L 397.8,224.7 L 398.5,225.1 L 399.1,225.6 L 399.7,226.0 L 400.3,226.5 L 400.9,226.9 L 401.4,227.3 L 402.0,227.7 L 402.5,228.1 L 403.0,228.4 L 403.5,228.8 L 404.0,229.1 L 404.4,229.4 L 404.9,229.8 L 405.3,230.1 L 405.7,230.4 L 406.1,230.6 L 406.4,230.9 L 406.8,231.2 L 407.2,231.4 L 407.5,231.7 L 407.8,231.9 L 408.1,232.1 L 408.4,232.3 L 408.6,232.5 L 408.9,232.7 L 409.2,232.9 L 409.4,233.0 L 409.6,233.2 L 409.8,233.4 L 410.0,233.5 L 410.2,233.7 L 410.4,233.8 L 410.6,233.9 L 410.8,234.0 L 410.9,234.2 L 411.1,234.3 L 411.2,234.4 L 411.4,234.5 L 411.5,234.6 L 411.6,234.6 L 411.7,234.7 L 411.8,234.8 L 411.9,234.9 L 412.0,234.9 L 412.1,235.0 L 412.2,235.1 L 412.2,235.1 L 412.3,235.2 L 412.4,235.2 L 412.5,235.3 L 412.6,235.4 L 412.6,235.4 L 412.7,235.5 L 412.8,235.5 L 412.8,235.6 L 412.9,235.6 L 413.0,235.6 L 413.0,235.7 L 413.1,235.7 L 413.1,235.8 L 413.2,235.8 L 413.3,235.9 L 413.4,235.9 L 413.5,236.0 L 413.6,236.1 L 413.7,236.2 L 413.7,236.2 L 413.8,236.3 L 413.9,236.3 L 413.9,236.3 L 413.9,236.3 L 413.9,236.4 L 414.0,236.4 L 414.0,236.4 Z');"><i style="left:45px;top:5px;width:14px;height:2px;background:linear-gradient(90deg,#009903 0px,#009901 13px)"></i><i style="left:37px;top:7px;width:32px;height:2px;background:linear-gradient(90deg,#009905 0px,#009900 31px)"></i><i style="left:33px;top:9px;width:44px;height:2px;background:linear-gradient(90deg,#009906 0px,#009900 43px)"></i><i style="left:29px;top:11px;width:54px;height:2px;background:linear-gradient(90deg,#009908 0px,#009900 53px)"></i><i style="left:27px;top:13px;width:61px;height:2px;background:linear-gradient(90deg,#009909 0px,#009900 60px)"></i><i style="left:24px;top:15px;width:69px;height:2px;background:linear-gradient(90deg,#00990a 0px,#009900 68px)"></i><i style="left:22px;top:17px;width:76px;height:2px;background:linear-gradient(90deg,#00990b 0px,#009900 75px)"></i><i style="left:21px;top:19px;width:81px;height:2px;background:linear-gradient(90deg,#00990b 0px,#009900 80px)"></i><i style="left:20px;top:21px;width:87px;height:2px;background:linear-gradient(90deg,#00990c 0px,#009900 86px)"></i><i style="left:18px;top:23px;width:93px;height:2px;background:linear-gradient(90deg,#00990d 0px,#009900 92px)"></i><i style="left:17px;top:25px;width:98px;height:2px;background:linear-gradient(90deg,#00990e 0px,#009900 96px,#009900 97px)"></i><i style="left:16px;top:27px;width:103px;height:2px;background:linear-gradient(90deg,#00990f 0px,#009900 100px,#009900 102px)"></i><i style="left:15px;top:29px;width:108px;height:2px;background:linear-gradient(90deg,#009910 0px,#009900 104px,#009900 107px)"></i><i style="left:15px;top:31px;width:112px;height:2px;background:linear-gradient(90deg,#009910 0px,#009900 106px,#009900 111px)"></i><i style="left:14px;top:33px;width:116px;height:2px;background:linear-gradient(90deg,#009911 0px,#009900 110px,#009900 115px)"></i><i style="left:13px;top:35px;width:121px;height:2px;background:linear-gradient(90deg,#009912 0px,#009900 114px,#009900 120px)"></i><i style="left:12px;top:37px;width:125px;height:2px;background:linear-gradient(90deg,#009913 0px,#009900 118px,#009900 124px)"></i><i style="left:12px;top:39px;width:129px;height:2px;background:linear-gradient(90deg,#009914 0px,#009900 121px,#009900 128px)"></i><i style="left:11px;top:41px;width:133px;height:2px;background:linear-gradient(90deg,#009915 0px,#009900 125px,#009900 132px)"></i><i style="left:11px;top:43px;width:137px;height:2px;background:linear-gradient(90deg,#009915 0px,#009900 127px,#009900 136px)"></i><i style="left:10px;top:45px;width:141px;height:2px;background:linear-gradient(90deg,#009916 0px,#009900 131px,#009900 140px)"></i><i style="left:10px;top:47px;width:144px;height:2px;background:linear-gradient(90deg,#009917 0px,#009900 134px,#009900 143px)"></i><i style="left:9px;top:49px;width:148px;height:2px;background:linear-gradient(90deg,#009918 0px,#009900 138px,#009900 147px)"></i><i style="left:9px;top:51px;width:151px;height:2px;background:linear-gradient(90deg,#009919 0px,#009900 141px,#029900 150px)"></i><i style="left:8px;top:53px;width:156px;height:2px;background:linear-gradient(90deg,#00991a 0px,#009900 145px,#069900 155px)"></i><i style="left:8px;top:55px;width:159px;height:2px;background:linear-gradient(90deg,#00991a 0px,#019900 148px,#089900 158px)"></i><i style="left:8px;top:57px;width:162px;height:2px;background:linear-gradient(90deg,#00991b 0px,#039900 150px,#0b9900 161px)"></i><i style="left:8px;top:59px;width:165px;height:2px;background:linear-gradient(90deg,#00991c 0px,#039900 150px,#0e9900 164px)"></i><i style="left:7px;top:61px;width:169px;height:2px;background:linear-gradient(90deg,#00991d 0px,#039900 150px,#119900 168px)"></i><i style="left:7px;top:63px;width:172px;height:2px;background:linear-gradient(90deg,#00991e 0px,#039900 150px,#159900 171px)"></i><i style="left:7px;top:65px;width:175px;height:2px;background:linear-gradient(90deg,#00991f 0px,#039900 149px,#189900 174px)"></i><i style="left:7px;top:67px;width:178px;height:2px;background:linear-gradient(90deg,#009920 0px,#039900 149px,#1b9900 177px)"></i><i style="left:7px;top:69px;width:181px;height:2px;background:linear-gradient(90deg,#009921 0px,#039902 148px,#1e9900 180px)"></i><i style="left:7px;top:71px;width:184px;height:2px;background:linear-gradient(90deg,#009921 0px,#029903 147px,#229900 183px)"></i><i style="left:6px;top:73px;width:187px;height:2px;background:linear-gradient(90deg,#009923 0px,#039903 148px,#259900 186px)"></i><i style="left:6px;top:75px;width:190px;height:2px;background:linear-gradient(90deg,#009923 0px,#029905 147px,#289900 189px)"></i><i style="left:6px;top:77px;width:193px;height:2px;background:linear-gradient(90deg,#009924 0px,#039905 147px,#2c9900 192px)"></i><i style="left:6px;top:79px;width:196px;height:2px;background:linear-gradient(90deg,#009925 0px,#029907 146px,#2b9900 190px,#309900 195px)"></i><i style="left:6px;top:81px;width:199px;height:2px;background:linear-gradient(90deg,#009926 0px,#039907 146px,#2d9900 191px,#349900 198px)"></i><i style="left:6px;top:83px;width:202px;height:2px;background:linear-gradient(90deg,#009927 0px,#029909 145px,#309900 193px,#389900 201px)"></i><i style="left:6px;top:85px;width:205px;height:2px;background:linear-gradient(90deg,#009928 0px,#03990a 145px,#339900 195px,#3d9900 204px)"></i><i style="left:6px;top:87px;width:208px;height:2px;background:linear-gradient(90deg,#009929 0px,#02990b 144px,#369900 197px,#419900 207px)"></i><i style="left:6px;top:89px;width:210px;height:2px;background:linear-gradient(90deg,#00992a 0px,#03990c 144px,#3b9900 200px,#459900 209px)"></i><i style="left:6px;top:91px;width:213px;height:2px;background:linear-gradient(90deg,#00992b 0px,#02990d 143px,#3e9900 202px,#499900 212px)"></i><i style="left:6px;top:93px;width:216px;height:2px;background:linear-gradient(90deg,#00992c 0px,#03990e 143px,#439900 205px,#4e9900 215px)"></i><i style="left:6px;top:95px;width:219px;height:2px;background:linear-gradient(90deg,#00992d 0px,#03990f 142px,#469900 207px,#539900 218px)"></i><i style="left:6px;top:97px;width:222px;height:2px;background:linear-gradient(90deg,#00992f 0px,#039910 142px,#4b9900 210px,#599900 221px)"></i><i style="left:6px;top:99px;width:224px;height:2px;background:linear-gradient(90deg,#009930 0px,#039912 141px,#509900 213px,#5d9900 223px)"></i><i style="left:6px;top:101px;width:227px;height:2px;background:linear-gradient(90deg,#009931 0px,#039913 141px,#549900 215px,#629900 226px)"></i><i style="left:7px;top:103px;width:229px;height:2px;background:linear-gradient(90deg,#009932 0px,#039914 139px,#549900 213px,#689900 228px)"></i><i style="left:7px;top:105px;width:232px;height:2px;background:linear-gradient(90deg,#009933 0px,#029916 138px,#539900 211px,#6e9900 231px)"></i><i style="left:7px;top:107px;width:235px;height:2px;background:linear-gradient(90deg,#009934 0px,#039917 138px,#549901 210px,#759900 234px)"></i><i style="left:7px;top:109px;width:237px;height:2px;background:linear-gradient(90deg,#009935 0px,#029918 137px,#549902 209px,#7a9900 236px)"></i><i style="left:7px;top:111px;width:240px;height:2px;background:linear-gradient(90deg,#009936 0px,#03991a 137px,#549904 208px,#809900 239px)"></i><i style="left:7px;top:113px;width:243px;height:2px;background:linear-gradient(90deg,#009938 0px,#02991b 136px,#539906 206px,#839900 239px,#879900 242px)"></i><i style="left:8px;top:115px;width:245px;height:2px;background:linear-gradient(90deg,#009939 0px,#03991c 135px,#559907 205px,#859900 238px,#8f9900 244px)"></i><i style="left:8px;top:117px;width:248px;height:2px;background:linear-gradient(90deg,#00993a 0px,#02991e 134px,#549909 203px,#899900 239px,#969900 247px)"></i><i style="left:8px;top:119px;width:250px;height:2px;background:linear-gradient(90deg,#00993b 0px,#03991f 134px,#54990b 202px,#8f9900 241px,#999500 249px)"></i><i style="left:8px;top:121px;width:253px;height:2px;background:linear-gradient(90deg,#00993d 0px,#029921 133px,#54990c 201px,#959900 243px,#998e00 252px)"></i><i style="left:8px;top:123px;width:256px;height:2px;background:linear-gradient(90deg,#00993e 0px,#039922 133px,#55990e 200px,#999600 245px,#998700 255px)"></i><i style="left:9px;top:125px;width:258px;height:2px;background:linear-gradient(90deg,#00993f 0px,#029924 131px,#549910 197px,#999700 242px,#998000 257px)"></i><i style="left:9px;top:127px;width:260px;height:2px;background:linear-gradient(90deg,#009941 0px,#039926 131px,#549912 196px,#999801 240px,#997b00 259px)"></i><i style="left:9px;top:129px;width:263px;height:2px;background:linear-gradient(90deg,#009942 0px,#029927 130px,#549914 195px,#999602 239px,#997500 262px)"></i><i style="left:9px;top:131px;width:266px;height:2px;background:linear-gradient(90deg,#009944 0px,#039929 130px,#549915 194px,#999705 237px,#996f00 265px)"></i><i style="left:9px;top:133px;width:269px;height:2px;background:linear-gradient(90deg,#009945 0px,#03992b 129px,#539918 192px,#999807 235px,#997000 262px,#996a00 268px)"></i><i style="left:10px;top:135px;width:270px;height:2px;background:linear-gradient(90deg,#009946 0px,#02992d 127px,#54991a 190px,#999609 233px,#996d00 262px,#996500 269px)"></i><i style="left:10px;top:137px;width:273px;height:2px;background:linear-gradient(90deg,#009948 0px,#03992e 127px,#54991c 189px,#99970b 231px,#996a00 263px,#996000 272px)"></i><i style="left:10px;top:139px;width:276px;height:2px;background:linear-gradient(90deg,#00994a 0px,#029930 126px,#53991e 187px,#99980e 229px,#996b00 260px,#995c00 275px)"></i><i style="left:11px;top:141px;width:278px;height:2px;background:linear-gradient(90deg,#00994b 0px,#039932 125px,#559920 186px,#999610 227px,#996901 258px,#995700 277px)"></i><i style="left:11px;top:143px;width:280px;height:2px;background:linear-gradient(90deg,#00994d 0px,#029934 124px,#539922 184px,#999712 225px,#996903 256px,#995300 279px)"></i><i style="left:11px;top:145px;width:283px;height:2px;background:linear-gradient(90deg,#00994e 0px,#039936 124px,#549924 183px,#999715 223px,#996b05 253px,#994f00 282px)"></i><i style="left:12px;top:147px;width:285px;height:2px;background:linear-gradient(90deg,#009950 0px,#029938 122px,#549927 181px,#999617 221px,#996907 251px,#994c00 283px,#994b00 284px)"></i><i style="left:12px;top:149px;width:288px;height:2px;background:linear-gradient(90deg,#009952 0px,#03993a 122px,#549929 180px,#99971a 219px,#996909 249px,#994900 284px,#994700 287px)"></i><i style="left:12px;top:151px;width:290px;height:2px;background:linear-gradient(90deg,#009953 0px,#02993c 121px,#53992c 178px,#99971d 217px,#996b0b 246px,#994700 285px,#994400 289px)"></i><i style="left:12px;top:153px;width:293px;height:2px;background:linear-gradient(90deg,#009955 0px,#03993e 121px,#53992e 177px,#99961f 216px,#99690d 245px,#994300 288px,#994100 292px)"></i><i style="left:13px;top:155px;width:295px;height:2px;background:linear-gradient(90deg,#009957 0px,#029940 119px,#549931 175px,#999722 213px,#996a0f 241px,#994300 284px,#993d00 294px)"></i><i style="left:13px;top:157px;width:298px;height:2px;background:linear-gradient(90deg,#009959 0px,#039942 119px,#549933 174px,#999725 211px,#996a12 239px,#994300 282px,#993a00 297px)"></i><i style="left:14px;top:159px;width:299px;height:2px;background:linear-gradient(90deg,#00995a 0px,#029945 117px,#539936 171px,#999628 209px,#996913 237px,#994202 280px,#993700 298px)"></i><i style="left:14px;top:161px;width:302px;height:2px;background:linear-gradient(90deg,#00995c 0px,#039947 117px,#559938 171px,#99972b 207px,#996a16 234px,#994304 276px,#993400 301px)"></i><i style="left:14px;top:163px;width:305px;height:2px;background:linear-gradient(90deg,#00995e 0px,#02994a 116px,#53993b 169px,#99972e 205px,#996a19 232px,#994306 273px,#993100 304px)"></i><i style="left:15px;top:165px;width:307px;height:2px;background:linear-gradient(90deg,#009960 0px,#03994c 115px,#54993e 167px,#999631 203px,#99691a 230px,#994207 271px,#992e00 306px)"></i><i style="left:15px;top:167px;width:310px;height:2px;background:linear-gradient(90deg,#009962 0px,#02994f 114px,#549941 166px,#999734 201px,#996a1e 227px,#994309 267px,#992b00 309px)"></i><i style="left:15px;top:169px;width:312px;height:2px;background:linear-gradient(90deg,#009965 0px,#029951 113px,#539944 164px,#999738 199px,#996a20 225px,#99430b 265px,#992900 311px)"></i><i style="left:16px;top:171px;width:314px;height:2px;background:linear-gradient(90deg,#009967 0px,#039954 112px,#539947 162px,#99963b 197px,#996922 223px,#99420c 263px,#992600 313px)"></i><i style="left:16px;top:173px;width:317px;height:2px;background:linear-gradient(90deg,#009969 0px,#029957 111px,#54994b 161px,#99973f 195px,#996a26 220px,#99430f 259px,#992400 316px)"></i><i style="left:17px;top:175px;width:319px;height:2px;background:linear-gradient(90deg,#00996b 0px,#03995a 110px,#54994e 159px,#999743 192px,#996a28 217px,#994311 255px,#992200 317px,#992100 318px)"></i><i style="left:17px;top:177px;width:321px;height:2px;background:linear-gradient(90deg,#00996e 0px,#02995d 109px,#529951 157px,#999847 190px,#996c2c 214px,#994414 251px,#992200 312px,#991f00 320px)"></i><i style="left:18px;top:179px;width:323px;height:2px;background:linear-gradient(90deg,#009970 0px,#039960 108px,#559955 156px,#99974a 188px,#996a2e 212px,#994316 249px,#992101 310px,#991d00 322px)"></i><i style="left:18px;top:181px;width:326px;height:2px;background:linear-gradient(90deg,#009972 0px,#029963 107px,#539958 154px,#99974e 186px,#996a31 210px,#994318 247px,#992102 307px,#991b00 325px)"></i><i style="left:18px;top:183px;width:329px;height:2px;background:linear-gradient(90deg,#009975 0px,#039966 107px,#54995c 153px,#999853 184px,#996c35 207px,#99451b 242px,#992305 300px,#991900 328px)"></i><i style="left:19px;top:185px;width:330px;height:2px;background:linear-gradient(90deg,#009977 0px,#029969 105px,#549960 151px,#999656 182px,#996a37 205px,#99431d 240px,#992206 298px,#991700 329px)"></i><i style="left:19px;top:187px;width:333px;height:2px;background:linear-gradient(90deg,#00997a 0px,#03996c 105px,#549964 150px,#99975b 180px,#996a3b 203px,#99431f 238px,#992207 295px,#991500 332px)"></i><i style="left:20px;top:189px;width:335px;height:2px;background:linear-gradient(90deg,#00997d 0px,#029970 103px,#539968 147px,#999860 177px,#996c3f 199px,#994422 233px,#99220a 289px,#991300 334px)"></i><i style="left:20px;top:191px;width:338px;height:2px;background:linear-gradient(90deg,#009980 0px,#039974 103px,#53996c 146px,#999663 176px,#996a42 198px,#994324 232px,#99210b 288px,#991100 337px)"></i><i style="left:21px;top:193px;width:339px;height:2px;background:linear-gradient(90deg,#009982 0px,#029977 101px,#549970 144px,#999769 173px,#996a45 195px,#994327 228px,#99210d 283px,#990f00 338px)"></i><i style="left:21px;top:195px;width:342px;height:2px;background:linear-gradient(90deg,#009985 0px,#03997b 101px,#549975 143px,#99986e 171px,#996c4a 192px,#99442b 224px,#992310 277px,#990e00 341px)"></i><i style="left:22px;top:197px;width:344px;height:2px;background:linear-gradient(90deg,#009988 0px,#02997f 99px,#529979 140px,#999672 169px,#996a4d 190px,#99432d 222px,#992211 275px,#990c00 343px)"></i><i style="left:22px;top:199px;width:347px;height:2px;background:linear-gradient(90deg,#00998c 0px,#019983 98px,#53997e 139px,#999778 167px,#996a51 188px,#99432f 220px,#992113 272px,#990a00 346px)"></i><i style="left:23px;top:201px;width:348px;height:2px;background:linear-gradient(90deg,#00998f 0px,#029988 97px,#539983 137px,#99987e 164px,#996b57 184px,#994433 215px,#992316 265px,#990900 347px)"></i><i style="left:23px;top:203px;width:351px;height:2px;background:linear-gradient(90deg,#009992 0px,#01998c 96px,#519988 135px,#999682 163px,#996a59 183px,#994235 214px,#992117 265px,#990700 350px)"></i><i style="left:24px;top:205px;width:353px;height:2px;background:linear-gradient(90deg,#009996 0px,#029990 95px,#54998d 134px,#999789 160px,#996a5e 180px,#994339 210px,#992119 260px,#990600 349px,#990500 352px)"></i><i style="left:24px;top:207px;width:356px;height:2px;background:linear-gradient(90deg,#009999 0px,#029995 94px,#529993 132px,#999890 158px,#996b64 177px,#99443e 206px,#99221d 254px,#990702 340px,#990400 355px)"></i><i style="left:25px;top:209px;width:357px;height:2px;background:linear-gradient(90deg,#009599 0px,#029899 93px,#539998 130px,#999694 156px,#996a67 175px,#994340 204px,#99211e 252px,#990602 339px,#990200 356px)"></i><i style="left:25px;top:211px;width:360px;height:2px;background:linear-gradient(90deg,#009299 0px,#029399 92px,#4e9499 128px,#999498 155px,#99686a 174px,#994243 202px,#992221 248px,#990605 331px,#990100 359px)"></i><i style="left:26px;top:213px;width:362px;height:2px;background:linear-gradient(90deg,#008e99 0px,#028e99 91px,#518f99 128px,#998c96 155px,#996269 174px,#993e42 203px,#991e20 250px,#990404 335px,#990000 361px)"></i><i style="left:27px;top:215px;width:364px;height:2px;background:linear-gradient(90deg,#008b99 0px,#018a99 89px,#4e8999 126px,#998797 154px,#995f6b 173px,#993b43 202px,#991d21 249px,#990305 334px,#990000 363px)"></i><i style="left:27px;top:217px;width:366px;height:2px;background:linear-gradient(90deg,#008799 0px,#028599 89px,#518499 127px,#998298 154px,#995b6c 173px,#993944 202px,#991b22 249px,#990206 333px,#990000 365px)"></i><i style="left:28px;top:219px;width:368px;height:2px;background:linear-gradient(90deg,#008499 0px,#018199 87px,#517f99 126px,#997b97 154px,#995569 174px,#993442 204px,#991720 253px,#990004 341px,#990000 367px)"></i><i style="left:28px;top:221px;width:371px;height:2px;background:linear-gradient(90deg,#008199 0px,#027d99 87px,#517a99 126px,#997698 154px,#99516a 174px,#993143 204px,#991621 253px,#990005 340px,#990000 370px)"></i><i style="left:29px;top:223px;width:373px;height:2px;background:linear-gradient(90deg,#007e99 0px,#017999 85px,#507599 125px,#997096 154px,#994d6a 174px,#992e42 205px,#991320 256px,#990006 337px,#990000 372px)"></i><i style="left:29px;top:225px;width:376px;height:2px;background:linear-gradient(90deg,#007a99 0px,#027599 85px,#507199 125px,#996b97 154px,#994869 175px,#992a41 207px,#99101f 259px,#990007 334px,#990000 375px)"></i><i style="left:30px;top:227px;width:377px;height:2px;background:linear-gradient(90deg,#007799 0px,#037199 84px,#506c99 124px,#996798 153px,#99456a 174px,#992842 206px,#990f20 258px,#990009 329px,#990000 376px)"></i><i style="left:31px;top:229px;width:379px;height:2px;background:linear-gradient(90deg,#007499 0px,#026d99 82px,#506899 123px,#996196 153px,#994169 174px,#992542 206px,#990c20 259px,#99000b 323px,#990000 378px)"></i><i style="left:31px;top:231px;width:382px;height:2px;background:linear-gradient(90deg,#007199 0px,#036999 82px,#506399 123px,#995d97 153px,#993e6b 174px,#992343 206px,#990b21 258px,#99000d 318px,#990000 381px)"></i><i style="left:32px;top:233px;width:384px;height:2px;background:linear-gradient(90deg,#006e99 0px,#026699 80px,#505f99 122px,#995998 152px,#993b6c 173px,#992044 205px,#990a22 257px,#99000e 313px,#990000 383px)"></i><i style="left:33px;top:235px;width:384px;height:2px;background:linear-gradient(90deg,#006b99 0px,#036299 79px,#505b99 121px,#995397 152px,#993669 174px,#991d42 207px,#990720 261px,#99000f 311px,#990000 383px)"></i><i style="left:33px;top:237px;width:383px;height:2px;background:linear-gradient(90deg,#006899 0px,#025f99 78px,#505799 121px,#994f98 152px,#99336a 174px,#991a42 208px,#990520 263px,#99000f 314px,#990001 382px)"></i><i style="left:34px;top:239px;width:376px;height:2px;background:linear-gradient(90deg,#006599 0px,#035b99 77px,#505399 120px,#994996 152px,#992e68 175px,#991640 210px,#99021f 267px,#990003 370px,#990002 375px)"></i><i style="left:34px;top:241px;width:370px;height:2px;background:linear-gradient(90deg,#006299 0px,#025899 76px,#504f99 120px,#994697 152px,#992b69 175px,#991541 210px,#990120 267px,#990004 369px)"></i><i style="left:35px;top:243px;width:363px;height:2px;background:linear-gradient(90deg,#005f99 0px,#035499 75px,#504b99 119px,#994298 151px,#99296a 174px,#991342 209px,#990020 266px,#990005 362px)"></i><i style="left:36px;top:245px;width:356px;height:2px;background:linear-gradient(90deg,#005c99 0px,#025199 73px,#504899 118px,#993d96 151px,#99256a 174px,#991042 209px,#990020 267px,#990007 355px)"></i><i style="left:37px;top:247px;width:349px;height:2px;background:linear-gradient(90deg,#005a99 0px,#034e99 72px,#504499 117px,#993997 150px,#99236a 173px,#990e43 208px,#990022 263px,#990009 348px)"></i><i style="left:37px;top:249px;width:343px;height:2px;background:linear-gradient(90deg,#005799 0px,#024b99 71px,#504099 117px,#993698 150px,#99206b 173px,#990c44 208px,#990025 258px,#99000b 342px)"></i><i style="left:38px;top:251px;width:336px;height:2px;background:linear-gradient(90deg,#005499 0px,#034899 70px,#503d99 116px,#993197 150px,#991c69 174px,#990941 211px,#990027 254px,#99000c 335px)"></i><i style="left:39px;top:253px;width:329px;height:2px;background:linear-gradient(90deg,#005199 0px,#024599 68px,#503a99 115px,#992e97 149px,#99196a 173px,#990742 210px,#99002a 249px,#99000e 328px)"></i><i style="left:39px;top:255px;width:323px;height:2px;background:linear-gradient(90deg,#004f99 0px,#034299 68px,#503699 115px,#992a96 150px,#991668 175px,#990441 213px,#990026 259px,#990010 322px)"></i><i style="left:40px;top:257px;width:317px;height:2px;background:linear-gradient(90deg,#004c99 0px,#024099 66px,#503399 114px,#992697 149px,#991369 174px,#990342 212px,#990020 274px,#990012 316px)"></i><i style="left:41px;top:259px;width:310px;height:2px;background:linear-gradient(90deg,#004a99 0px,#033d99 65px,#503099 113px,#992398 148px,#99116a 173px,#990142 211px,#990020 273px,#990014 309px)"></i><i style="left:42px;top:261px;width:303px;height:2px;background:linear-gradient(90deg,#004799 0px,#023a99 63px,#502d99 112px,#991f96 148px,#990e6a 173px,#990042 212px,#990020 275px,#990017 302px)"></i><i style="left:42px;top:263px;width:297px;height:2px;background:linear-gradient(90deg,#004599 0px,#033899 63px,#502a99 112px,#991c97 148px,#990c6a 173px,#990042 212px,#990020 275px,#990019 296px)"></i><i style="left:43px;top:265px;width:290px;height:2px;background:linear-gradient(90deg,#004299 0px,#023599 61px,#502799 111px,#991998 147px,#99096a 173px,#990047 206px,#990024 266px,#99001c 289px)"></i><i style="left:44px;top:267px;width:283px;height:2px;background:linear-gradient(90deg,#003f99 0px,#023299 60px,#502499 110px,#991596 147px,#990669 173px,#99004a 203px,#990027 261px,#99001e 282px)"></i><i style="left:45px;top:269px;width:276px;height:2px;background:linear-gradient(90deg,#003d99 0px,#033099 59px,#522199 110px,#991297 146px,#99046a 172px,#990042 212px,#990021 275px)"></i><i style="left:46px;top:271px;width:269px;height:2px;background:linear-gradient(90deg,#003a99 0px,#022e99 57px,#501e99 108px,#990f96 146px,#990168 173px,#990041 214px,#990024 268px)"></i><i style="left:47px;top:273px;width:262px;height:2px;background:linear-gradient(90deg,#003899 0px,#032b99 56px,#521b99 108px,#990c97 145px,#990069 172px,#990042 213px,#990027 261px)"></i><i style="left:48px;top:275px;width:255px;height:2px;background:linear-gradient(90deg,#003699 0px,#022999 54px,#501999 106px,#990998 144px,#99006a 171px,#990042 212px,#99002a 254px)"></i><i style="left:48px;top:277px;width:249px;height:2px;background:linear-gradient(90deg,#003399 0px,#032699 54px,#521699 107px,#990696 145px,#99006c 170px,#990044 211px,#99002e 248px)"></i><i style="left:49px;top:279px;width:242px;height:2px;background:linear-gradient(90deg,#003199 0px,#022499 52px,#501399 105px,#990397 144px,#990069 172px,#990042 214px,#990032 241px)"></i><i style="left:50px;top:281px;width:236px;height:2px;background:linear-gradient(90deg,#002f99 0px,#032299 51px,#521099 105px,#990098 143px,#99006a 171px,#990042 213px,#990035 235px)"></i><i style="left:51px;top:283px;width:229px;height:2px;background:linear-gradient(90deg,#002c99 0px,#022099 49px,#500e99 103px,#990096 143px,#990069 171px,#990042 214px,#990039 228px)"></i><i style="left:52px;top:285px;width:222px;height:2px;background:linear-gradient(90deg,#002a99 0px,#031e99 48px,#520b99 103px,#970099 140px,#990065 174px,#99003e 219px,#99003d 221px)"></i><i style="left:53px;top:287px;width:215px;height:2px;background:linear-gradient(90deg,#002899 0px,#021c99 46px,#500999 101px,#8c0099 134px,#990096 142px,#990069 171px,#990042 214px)"></i><i style="left:54px;top:289px;width:208px;height:2px;background:linear-gradient(90deg,#002599 0px,#031a99 45px,#510799 101px,#850099 130px,#990097 141px,#990069 170px,#990047 207px)"></i><i style="left:55px;top:291px;width:201px;height:2px;background:linear-gradient(90deg,#002399 0px,#021899 43px,#500599 99px,#880099 131px,#990095 141px,#990069 170px,#99004c 200px)"></i><i style="left:56px;top:293px;width:194px;height:2px;background:linear-gradient(90deg,#002199 0px,#031699 42px,#510299 99px,#990096 140px,#990068 170px,#990051 193px)"></i><i style="left:57px;top:295px;width:187px;height:2px;background:linear-gradient(90deg,#001f99 0px,#021499 40px,#500099 97px,#990097 139px,#990069 169px,#990058 186px)"></i><i style="left:58px;top:297px;width:180px;height:2px;background:linear-gradient(90deg,#001c99 0px,#031299 39px,#510099 97px,#990098 138px,#99006a 168px,#99005e 179px)"></i><i style="left:59px;top:299px;width:173px;height:2px;background:linear-gradient(90deg,#001a99 0px,#021099 37px,#500099 95px,#990096 138px,#99006a 168px,#990065 172px)"></i><i style="left:61px;top:301px;width:165px;height:2px;background:linear-gradient(90deg,#001899 0px,#030e99 35px,#480099 88px,#990097 136px,#99006d 164px)"></i><i style="left:62px;top:303px;width:158px;height:2px;background:linear-gradient(90deg,#001699 0px,#030c99 34px,#410099 82px,#940099 132px,#99008f 140px,#990075 157px)"></i><i style="left:63px;top:305px;width:152px;height:2px;background:linear-gradient(90deg,#001399 0px,#030a99 32px,#3a0099 76px,#8c0099 127px,#990095 136px,#99007c 151px)"></i><i style="left:64px;top:307px;width:145px;height:2px;background:linear-gradient(90deg,#001199 0px,#030899 31px,#350099 71px,#860099 123px,#990096 135px,#990086 144px)"></i><i style="left:65px;top:309px;width:138px;height:2px;background:linear-gradient(90deg,#000f99 0px,#030799 29px,#2f0099 66px,#820099 120px,#990096 134px,#990091 137px)"></i><i style="left:66px;top:311px;width:131px;height:2px;background:linear-gradient(90deg,#000d99 0px,#030599 28px,#320099 67px,#850099 121px,#950099 130px)"></i><i style="left:68px;top:313px;width:123px;height:2px;background:linear-gradient(90deg,#000b99 0px,#030499 25px,#510099 87px,#8a0099 122px)"></i><i style="left:69px;top:315px;width:116px;height:2px;background:linear-gradient(90deg,#000999 0px,#030299 24px,#510099 86px,#7f0099 115px)"></i><i style="left:71px;top:317px;width:108px;height:2px;background:linear-gradient(90deg,#000799 0px,#040099 22px,#530099 85px,#750099 107px)"></i><i style="left:72px;top:319px;width:101px;height:2px;background:linear-gradient(90deg,#000599 0px,#030099 20px,#510099 83px,#6b0099 100px)"></i><i style="left:74px;top:321px;width:93px;height:2px;background:linear-gradient(90deg,#000299 0px,#040099 18px,#530099 82px,#610099 92px)"></i><i style="left:75px;top:323px;width:86px;height:2px;background:linear-gradient(90deg,#000099 0px,#030099 16px,#510099 80px,#580099 85px)"></i><i style="left:77px;top:325px;width:78px;height:2px;background:linear-gradient(90deg,#000099 0px,#040099 14px,#500099 77px)"></i><i style="left:79px;top:327px;width:70px;height:2px;background:linear-gradient(90deg,#000099 0px,#040099 12px,#470099 69px)"></i><i style="left:81px;top:329px;width:63px;height:2px;background:linear-gradient(90deg,#000099 0px,#070099 12px,#410099 62px)"></i><i style="left:83px;top:331px;width:55px;height:2px;background:linear-gradient(90deg,#000099 0px,#210099 34px,#390099 54px)"></i><i style="left:86px;top:333px;width:46px;height:2px;background:linear-gradient(90deg,#000099 0px,#320099 45px)"></i><i style="left:89px;top:335px;width:37px;height:2px;background:linear-gradient(90deg,#040099 0px,#2b0099 36px)"></i><i style="left:92px;top:337px;width:28px;height:2px;background:linear-gradient(90deg,#070099 0px,#240099 27px)"></i><i style="left:95px;top:339px;width:19px;height:2px;background:linear-gradient(90deg,#0b0099 0px,#1e0099 18px)"></i><i style="left:98px;top:341px;width:10px;height:2px;background:linear-gradient(90deg,#0e0099 0px,#180099 9px)"></i></div>
<div class="g" style="left:720px;top:25px;width:430px;height:350px;clip-path:path('M 383.7,214.3 L 153.5,64.9 L 89.8,319.3 Z');"><i style="left:151px;top:63px;width:6px;height:2px;background:linear-gradient(90deg,#00ff00 0px,#04ff00 5px)"></i><i style="left:151px;top:65px;width:9px;height:2px;background:linear-gradient(90deg,#00ff02 0px,#08ff00 8px)"></i><i style="left:150px;top:67px;width:13px;height:2px;background:linear-gradient(90deg,#00ff03 0px,#0dff00 12px)"></i><i style="left:150px;top:69px;width:16px;height:2px;background:linear-gradient(90deg,#00ff05 0px,#12ff00 15px)"></i><i style="left:149px;top:71px;width:20px;height:2px;background:linear-gradient(90deg,#00ff06 0px,#18ff00 19px)"></i><i style="left:149px;top:73px;width:24px;height:2px;background:linear-gradient(90deg,#00ff08 0px,#1eff00 23px)"></i><i style="left:148px;top:75px;width:28px;height:2px;background:linear-gradient(90deg,#00ff0a 0px,#24ff00 27px)"></i><i style="left:148px;top:77px;width:31px;height:2px;background:linear-gradient(90deg,#00ff0b 0px,#2aff00 30px)"></i><i style="left:147px;top:79px;width:35px;height:2px;background:linear-gradient(90deg,#00ff0d 0px,#22ff02 25px,#30ff00 34px)"></i><i style="left:147px;top:81px;width:38px;height:2px;background:linear-gradient(90deg,#00ff0f 0px,#36ff00 37px)"></i><i style="left:146px;top:83px;width:42px;height:2px;background:linear-gradient(90deg,#00ff11 0px,#1fff06 23px,#3cff00 41px)"></i><i style="left:146px;top:85px;width:45px;height:2px;background:linear-gradient(90deg,#00ff12 0px,#42ff00 44px)"></i><i style="left:145px;top:87px;width:49px;height:2px;background:linear-gradient(90deg,#00ff14 0px,#1cff0b 21px,#49ff00 48px)"></i><i style="left:145px;top:89px;width:52px;height:2px;background:linear-gradient(90deg,#00ff16 0px,#43ff01 44px,#50ff00 51px)"></i><i style="left:144px;top:91px;width:56px;height:2px;background:linear-gradient(90deg,#00ff18 0px,#1bff0f 20px,#57ff00 55px)"></i><i style="left:144px;top:93px;width:59px;height:2px;background:linear-gradient(90deg,#00ff1a 0px,#43ff06 43px,#5eff00 58px)"></i><i style="left:143px;top:95px;width:63px;height:2px;background:linear-gradient(90deg,#00ff1c 0px,#19ff14 18px,#66ff00 62px)"></i><i style="left:143px;top:97px;width:66px;height:2px;background:linear-gradient(90deg,#00ff1e 0px,#43ff0a 42px,#6dff00 65px)"></i><i style="left:142px;top:99px;width:71px;height:2px;background:linear-gradient(90deg,#00ff20 0px,#17ff18 17px,#77ff00 70px)"></i><i style="left:142px;top:101px;width:74px;height:2px;background:linear-gradient(90deg,#00ff22 0px,#40ff0f 40px,#80ff00 73px)"></i><i style="left:141px;top:103px;width:78px;height:2px;background:linear-gradient(90deg,#00ff24 0px,#16ff1d 16px,#80ff00 73px,#89ff00 77px)"></i><i style="left:141px;top:105px;width:81px;height:2px;background:linear-gradient(90deg,#00ff26 0px,#40ff14 39px,#92ff00 80px)"></i><i style="left:140px;top:107px;width:85px;height:2px;background:linear-gradient(90deg,#00ff28 0px,#15ff22 15px,#7fff05 71px,#9bff00 84px)"></i><i style="left:139px;top:109px;width:89px;height:2px;background:linear-gradient(90deg,#00ff2b 0px,#09ff27 8px,#70ff0b 64px,#a5ff00 88px)"></i><i style="left:139px;top:111px;width:92px;height:2px;background:linear-gradient(90deg,#00ff2d 0px,#14ff27 14px,#7dff0a 69px,#afff00 91px)"></i><i style="left:138px;top:113px;width:96px;height:2px;background:linear-gradient(90deg,#00ff2f 0px,#09ff2c 8px,#71ff10 63px,#b9ff00 95px)"></i><i style="left:138px;top:115px;width:99px;height:2px;background:linear-gradient(90deg,#00ff32 0px,#12ff2c 13px,#7cff10 67px,#c4ff00 98px)"></i><i style="left:137px;top:117px;width:103px;height:2px;background:linear-gradient(90deg,#00ff34 0px,#09ff31 8px,#71ff16 62px,#d0ff00 102px)"></i><i style="left:137px;top:119px;width:106px;height:2px;background:linear-gradient(90deg,#00ff36 0px,#11ff31 12px,#7aff16 65px,#dcff00 105px)"></i><i style="left:136px;top:121px;width:110px;height:2px;background:linear-gradient(90deg,#00ff39 0px,#09ff36 8px,#71ff1b 61px,#e0ff00 106px,#e8ff00 109px)"></i><i style="left:136px;top:123px;width:114px;height:2px;background:linear-gradient(90deg,#00ff3b 0px,#11ff36 12px,#7bff1c 64px,#eaff00 108px,#f8ff00 113px)"></i><i style="left:135px;top:125px;width:118px;height:2px;background:linear-gradient(90deg,#00ff3e 0px,#08ff3b 7px,#70ff21 59px,#ddff06 103px,#fffc00 116px,#fff900 117px)"></i><i style="left:135px;top:127px;width:121px;height:2px;background:linear-gradient(90deg,#00ff41 0px,#10ff3c 11px,#79ff22 62px,#e7ff07 105px,#fffd01 114px,#ffec00 120px)"></i><i style="left:134px;top:129px;width:125px;height:2px;background:linear-gradient(90deg,#00ff44 0px,#08ff41 7px,#70ff27 58px,#ddff0d 101px,#fffe05 113px,#ffe000 124px)"></i><i style="left:134px;top:131px;width:128px;height:2px;background:linear-gradient(90deg,#00ff46 0px,#0eff42 10px,#77ff29 60px,#e5ff0f 102px,#fffc08 112px,#ffd400 127px)"></i><i style="left:133px;top:133px;width:132px;height:2px;background:linear-gradient(90deg,#00ff49 0px,#08ff46 7px,#70ff2e 57px,#deff14 99px,#fffd0c 111px,#ffc900 131px)"></i><i style="left:133px;top:135px;width:135px;height:2px;background:linear-gradient(90deg,#00ff4c 0px,#0fff48 10px,#78ff2f 59px,#e5ff16 100px,#fffe10 109px,#ffc300 132px,#ffbf00 134px)"></i><i style="left:132px;top:137px;width:139px;height:2px;background:linear-gradient(90deg,#00ff4f 0px,#08ff4c 7px,#71ff34 56px,#deff1b 97px,#fffc13 109px,#ffc101 132px,#ffb500 138px)"></i><i style="left:132px;top:139px;width:142px;height:2px;background:linear-gradient(90deg,#00ff52 0px,#0dff4e 9px,#76ff37 57px,#e6ff1d 98px,#fffd17 107px,#ffc204 130px,#ffac00 141px)"></i><i style="left:131px;top:141px;width:146px;height:2px;background:linear-gradient(90deg,#00ff55 0px,#06ff53 6px,#6fff3c 54px,#dbff24 94px,#fffe1b 106px,#ffc408 128px,#ffa300 145px)"></i><i style="left:131px;top:143px;width:149px;height:2px;background:linear-gradient(90deg,#00ff58 0px,#0dff54 9px,#76ff3e 56px,#e6ff25 96px,#fffb1f 105px,#ffc20b 127px,#ff9b00 148px)"></i><i style="left:130px;top:145px;width:153px;height:2px;background:linear-gradient(90deg,#00ff5c 0px,#06ff59 6px,#6fff43 53px,#deff2b 93px,#fffc23 104px,#ffc20e 126px,#ff9300 152px)"></i><i style="left:130px;top:147px;width:157px;height:2px;background:linear-gradient(90deg,#00ff5f 0px,#0cff5b 8px,#74ff45 54px,#e3ff2e 93px,#fffe28 102px,#ffc212 124px,#ff8d00 154px,#ff8a00 156px)"></i><i style="left:129px;top:149px;width:161px;height:2px;background:linear-gradient(90deg,#00ff62 0px,#07ff60 6px,#70ff4a 52px,#dfff33 91px,#fffb2b 102px,#ffc015 124px,#ff8b01 154px,#ff8300 160px)"></i><i style="left:129px;top:151px;width:164px;height:2px;background:linear-gradient(90deg,#00ff66 0px,#0cff62 8px,#75ff4d 53px,#e4ff37 91px,#fffc30 100px,#ffc319 121px,#ff8e04 150px,#ff7c00 163px)"></i><i style="left:128px;top:153px;width:168px;height:2px;background:linear-gradient(90deg,#00ff69 0px,#07ff67 6px,#70ff52 51px,#dfff3c 89px,#fffe35 99px,#ffc31d 120px,#ff8d07 149px,#ff7600 167px)"></i><i style="left:128px;top:155px;width:171px;height:2px;background:linear-gradient(90deg,#00ff6d 0px,#0aff6a 7px,#73ff56 51px,#e1ff40 88px,#ffff3a 97px,#ffc321 118px,#ff8e0b 146px,#ff6f00 170px)"></i><i style="left:127px;top:157px;width:175px;height:2px;background:linear-gradient(90deg,#00ff71 0px,#07ff6e 6px,#6eff5b 49px,#dcff46 86px,#fffc3e 97px,#ffc124 118px,#ff8c0d 146px,#ff6900 174px)"></i><i style="left:127px;top:159px;width:178px;height:2px;background:linear-gradient(90deg,#00ff74 0px,#0aff72 7px,#73ff5e 50px,#e1ff4a 86px,#fffe44 95px,#ffc329 115px,#ff8e11 143px,#ff6300 177px)"></i><i style="left:126px;top:161px;width:182px;height:2px;background:linear-gradient(90deg,#00ff78 0px,#07ff76 6px,#6eff64 48px,#dcff50 84px,#ffff49 94px,#ffc32e 114px,#ff8f15 141px,#ff5f00 180px,#ff5e00 181px)"></i><i style="left:126px;top:163px;width:185px;height:2px;background:linear-gradient(90deg,#00ff7c 0px,#08ff7a 6px,#71ff68 48px,#deff54 83px,#fffc4d 93px,#ffc131 113px,#ff8d17 140px,#ff5d00 179px,#ff5800 184px)"></i><i style="left:125px;top:165px;width:189px;height:2px;background:linear-gradient(90deg,#00ff81 0px,#05ff7f 5px,#6cff6d 46px,#d9ff5b 81px,#fffe53 92px,#ffc436 111px,#ff8f1c 137px,#ff5f04 175px,#ff5300 188px)"></i><i style="left:125px;top:167px;width:192px;height:2px;background:linear-gradient(90deg,#00ff85 0px,#09ff82 6px,#72ff71 47px,#deff5f 81px,#ffff59 90px,#ffc43b 109px,#ff8f20 135px,#ff5f07 172px,#ff4e00 191px)"></i><i style="left:124px;top:169px;width:196px;height:2px;background:linear-gradient(90deg,#00ff89 0px,#05ff87 5px,#6cff77 45px,#d9ff65 79px,#fffc5e 90px,#ffc23e 109px,#ff8d22 135px,#ff5e09 172px,#ff4a00 195px)"></i><i style="left:124px;top:171px;width:199px;height:2px;background:linear-gradient(90deg,#00ff8d 0px,#09ff8b 6px,#6fff7b 45px,#dfff6a 79px,#fffe64 88px,#ffc243 107px,#ff8c26 133px,#ff5d0c 170px,#ff4500 198px)"></i><i style="left:123px;top:173px;width:204px;height:2px;background:linear-gradient(90deg,#00ff92 0px,#05ff90 5px,#6dff81 44px,#d9ff71 77px,#ffff6b 87px,#ffc54a 105px,#ff8f2b 130px,#ff5f10 166px,#ff4000 203px)"></i><i style="left:123px;top:175px;width:207px;height:2px;background:linear-gradient(90deg,#00ff97 0px,#07ff95 5px,#70ff86 44px,#dfff76 77px,#fffc6f 86px,#ffc24d 104px,#ff8d2e 129px,#ff5d12 165px,#ff3c00 206px)"></i><i style="left:122px;top:177px;width:211px;height:2px;background:linear-gradient(90deg,#00ff9c 0px,#06ff9a 5px,#6dff8c 43px,#d9ff7d 75px,#fffe76 85px,#ffc353 103px,#ff8d32 128px,#ff5e15 163px,#ff3700 210px)"></i><i style="left:122px;top:179px;width:214px;height:2px;background:linear-gradient(90deg,#00ffa1 0px,#07ff9f 5px,#6dff91 42px,#dbff83 74px,#ffff7e 83px,#ffc65a 100px,#ff9038 124px,#ff601a 158px,#ff3600 209px,#ff3300 213px)"></i><i style="left:121px;top:181px;width:218px;height:2px;background:linear-gradient(90deg,#00ffa6 0px,#06ffa4 5px,#6eff97 42px,#daff89 73px,#fffc83 83px,#ffc35e 100px,#ff8e3b 124px,#ff5e1c 158px,#ff3401 209px,#ff3000 217px)"></i><i style="left:121px;top:183px;width:221px;height:2px;background:linear-gradient(90deg,#00ffab 0px,#07ffa9 5px,#6eff9d 41px,#dcff90 72px,#fffe8a 81px,#ffc363 98px,#ff8f40 121px,#ff6021 154px,#ff3605 203px,#ff2c00 220px)"></i><i style="left:120px;top:185px;width:225px;height:2px;background:linear-gradient(90deg,#00ffb0 0px,#06ffaf 5px,#6effa3 41px,#daff97 71px,#ffff92 80px,#ffc369 97px,#ff8e45 120px,#ff5f24 153px,#ff3507 202px,#ff2800 224px)"></i><i style="left:120px;top:187px;width:228px;height:2px;background:linear-gradient(90deg,#00ffb6 0px,#07ffb5 5px,#6effa9 40px,#dcff9d 70px,#fffc98 79px,#ffc16d 96px,#ff8c48 119px,#ff5d26 152px,#ff3309 201px,#ff2500 227px)"></i><i style="left:119px;top:189px;width:232px;height:2px;background:linear-gradient(90deg,#00ffbc 0px,#06ffbb 5px,#6fffb0 40px,#daffa5 69px,#fffea0 78px,#ffc476 94px,#ff8f4f 116px,#ff5f2c 148px,#ff360d 195px,#ff2100 231px)"></i><i style="left:119px;top:191px;width:235px;height:2px;background:linear-gradient(90deg,#00ffc2 0px,#05ffc1 4px,#6bffb7 38px,#d8ffad 67px,#ffffa9 76px,#ffc47c 92px,#ff8f54 114px,#ff6030 145px,#ff3611 191px,#ff1e00 234px)"></i><i style="left:118px;top:193px;width:239px;height:2px;background:linear-gradient(90deg,#00ffc8 0px,#06ffc7 5px,#6fffbe 39px,#daffb4 67px,#fffcaf 76px,#ffc181 92px,#ff8c57 114px,#ff5d33 145px,#ff3412 192px,#ff1b00 238px)"></i><i style="left:118px;top:195px;width:242px;height:2px;background:linear-gradient(90deg,#00ffce 0px,#05ffcd 4px,#6cffc5 37px,#d8ffbc 65px,#fffeb8 74px,#ffc58a 89px,#ff905f 110px,#ff6039 140px,#ff3617 185px,#ff1800 241px)"></i><i style="left:117px;top:197px;width:247px;height:2px;background:linear-gradient(90deg,#00ffd5 0px,#04ffd4 4px,#6cffcc 37px,#dbffc4 65px,#ffffc2 73px,#ffc591 88px,#ff8f65 109px,#ff5f3d 139px,#ff361a 183px,#ff1400 246px)"></i><i style="left:117px;top:199px;width:250px;height:2px;background:linear-gradient(90deg,#00ffdb 0px,#05ffdb 4px,#6cffd4 36px,#d8ffcd 63px,#fffcc8 72px,#ffc296 87px,#ff8d68 108px,#ff5d3f 138px,#ff331b 183px,#ff1200 248px,#ff1100 249px)"></i><i style="left:116px;top:201px;width:254px;height:2px;background:linear-gradient(90deg,#00ffe3 0px,#04ffe2 4px,#6dffdc 36px,#dbffd6 63px,#fffed2 71px,#ffc29e 86px,#ff8e70 106px,#ff5f45 135px,#ff3520 178px,#ff1100 247px,#ff0f00 253px)"></i><i style="left:116px;top:203px;width:257px;height:2px;background:linear-gradient(90deg,#00ffea 0px,#05ffe9 4px,#6dffe4 35px,#d9ffdf 61px,#ffffdd 69px,#ffc3a6 84px,#ff8e75 104px,#ff5f4b 132px,#ff3524 174px,#ff1103 241px,#ff0c00 256px)"></i><i style="left:115px;top:205px;width:261px;height:2px;background:linear-gradient(90deg,#00fff1 0px,#04fff1 4px,#6dffed 35px,#dbffe8 61px,#fffce4 69px,#ffc3ae 83px,#ff8d7b 103px,#ff5e4f 131px,#ff3427 173px,#ff1005 240px,#ff0900 260px)"></i><i style="left:115px;top:207px;width:264px;height:2px;background:linear-gradient(90deg,#00fff9 0px,#06fff9 4px,#6dfff5 34px,#d9fff2 59px,#fffeef 67px,#ffc3b7 81px,#ff8f83 100px,#ff6055 127px,#ff352c 168px,#ff1109 233px,#ff0700 263px)"></i><i style="left:114px;top:209px;width:268px;height:2px;background:linear-gradient(90deg,#00fdff 0px,#04fdff 4px,#6affff 33px,#d7fffc 58px,#fffffb 66px,#ffc3bf 80px,#ff8e8a 99px,#ff5f5a 126px,#ff3530 166px,#ff110c 230px,#ff0400 267px)"></i><i style="left:114px;top:211px;width:271px;height:2px;background:linear-gradient(90deg,#00f5ff 0px,#06f5ff 4px,#6af6ff 33px,#d3f8ff 57px,#fff7fe 66px,#ffbdc1 80px,#ff898c 99px,#ff5b5b 126px,#ff3231 166px,#ff0f0d 229px,#ff0200 270px)"></i><i style="left:113px;top:213px;width:274px;height:2px;background:linear-gradient(90deg,#00edff 0px,#04edff 4px,#67eeff 33px,#d2eeff 58px,#ffeeff 67px,#ffb6c3 81px,#ff848d 100px,#ff575d 127px,#ff3033 167px,#ff0e0e 230px,#ff0000 273px)"></i><i style="left:113px;top:215px;width:272px;height:2px;background:linear-gradient(90deg,#00e6ff 0px,#05e6ff 4px,#6be5ff 34px,#d5e4ff 59px,#ffe1fc 68px,#ffadc2 82px,#ff7d8d 101px,#ff525d 128px,#ff2c33 168px,#ff0b0e 232px,#ff0001 271px)"></i><i style="left:112px;top:217px;width:268px;height:2px;background:linear-gradient(90deg,#00dfff 0px,#04deff 4px,#67ddff 34px,#cfdbff 59px,#ffd9fe 69px,#ffa6c4 83px,#ff788f 102px,#ff4e5f 129px,#ff2935 169px,#ff0910 232px,#ff0003 267px)"></i><i style="left:112px;top:219px;width:262px;height:2px;background:linear-gradient(90deg,#00d7ff 0px,#05d7ff 4px,#68d4ff 34px,#d3d2ff 60px,#fed1ff 69px,#ff9dc2 84px,#ff708c 104px,#ff475c 132px,#ff2432 174px,#ff050e 240px,#ff0006 261px)"></i><i style="left:111px;top:221px;width:257px;height:2px;background:linear-gradient(90deg,#00d0ff 0px,#04d0ff 4px,#68cdff 35px,#d2c9ff 61px,#ffc5fd 71px,#ff94c1 86px,#ff698c 106px,#ff425b 135px,#ff1f31 178px,#ff010d 246px,#ff0009 256px)"></i><i style="left:111px;top:223px;width:252px;height:2px;background:linear-gradient(90deg,#00caff 0px,#05c9ff 4px,#68c5ff 35px,#d1c0ff 61px,#ffbeff 71px,#ff8ec3 86px,#ff658d 106px,#ff3e5d 135px,#ff1d32 178px,#ff000e 246px,#ff000c 251px)"></i><i style="left:110px;top:225px;width:247px;height:2px;background:linear-gradient(90deg,#00c3ff 0px,#07c2ff 5px,#69bdff 36px,#d4b8ff 63px,#feb6ff 72px,#ff84be 89px,#ff5b89 110px,#ff3759 140px,#ff172f 185px,#ff000f 246px)"></i><i style="left:110px;top:227px;width:242px;height:2px;background:linear-gradient(90deg,#00bdff 0px,#05bcff 4px,#69b6ff 36px,#d3b0ff 63px,#ffacfd 73px,#ff80c3 88px,#ff588d 109px,#ff365d 138px,#ff1633 182px,#ff0012 241px)"></i><i style="left:109px;top:229px;width:237px;height:2px;background:linear-gradient(90deg,#00b6ff 0px,#06b5ff 5px,#69afff 37px,#d2a8ff 64px,#ffa5ff 74px,#ff7bc5 89px,#ff548e 110px,#ff325f 139px,#ff1434 183px,#ff0016 236px)"></i><i style="left:109px;top:231px;width:231px;height:2px;background:linear-gradient(90deg,#00b0ff 0px,#05afff 4px,#6aa8ff 37px,#d1a0ff 64px,#ff9afc 75px,#ff71c0 91px,#ff4c8a 113px,#ff2b5a 144px,#ff0e30 190px,#ff0019 230px)"></i><i style="left:108px;top:233px;width:227px;height:2px;background:linear-gradient(90deg,#00aaff 0px,#06a9ff 5px,#6aa1ff 38px,#d498ff 66px,#ff94fe 76px,#ff6cc2 92px,#ff488b 114px,#ff285b 145px,#ff0c31 191px,#ff001d 226px)"></i><i style="left:108px;top:235px;width:221px;height:2px;background:linear-gradient(90deg,#00a4ff 0px,#05a3ff 4px,#6a9aff 38px,#d391ff 66px,#ff8dff 76px,#ff66c3 92px,#ff438d 114px,#ff255d 145px,#ff0932 191px,#ff0021 220px)"></i><i style="left:107px;top:237px;width:217px;height:2px;background:linear-gradient(90deg,#009fff 0px,#069dff 5px,#6b93ff 39px,#d289ff 67px,#ff83fd 78px,#ff5fc2 94px,#ff3e8d 116px,#ff215d 147px,#ff0733 193px,#ff0025 216px)"></i><i style="left:107px;top:239px;width:211px;height:2px;background:linear-gradient(90deg,#0099ff 0px,#0797ff 5px,#6b8dff 39px,#d582ff 68px,#ff7dfe 78px,#ff5ac4 94px,#ff3a8e 116px,#ff1e5e 147px,#ff0434 193px,#ff0029 210px)"></i><i style="left:106px;top:241px;width:206px;height:2px;background:linear-gradient(90deg,#0093ff 0px,#0692ff 5px,#6b87ff 40px,#d47bff 69px,#fe76ff 79px,#ff53c2 96px,#ff348c 119px,#ff195c 151px,#ff0032 199px,#ff002e 205px)"></i><i style="left:106px;top:243px;width:201px;height:2px;background:linear-gradient(90deg,#008eff 0px,#078cff 5px,#6b81ff 40px,#d374ff 69px,#ff6efd 80px,#ff4dc1 97px,#ff2f8c 120px,#ff145b 153px,#ff0032 200px)"></i><i style="left:105px;top:245px;width:196px;height:2px;background:linear-gradient(90deg,#0089ff 0px,#0687ff 5px,#687bff 40px,#d26eff 70px,#ff68ff 81px,#ff48c3 98px,#ff2b8d 121px,#ff125d 154px,#ff0038 195px)"></i><i style="left:105px;top:247px;width:191px;height:2px;background:linear-gradient(90deg,#0084ff 0px,#0782ff 5px,#6c75ff 41px,#d567ff 71px,#ff60fc 82px,#ff42c1 99px,#ff278d 122px,#ff0e5d 155px,#ff003c 190px)"></i><i style="left:104px;top:249px;width:186px;height:2px;background:linear-gradient(90deg,#007fff 0px,#067dff 5px,#696fff 41px,#d461ff 72px,#ff5afd 83px,#ff3dc3 100px,#ff238e 123px,#ff0b5e 156px,#ff0042 185px)"></i><i style="left:104px;top:251px;width:180px;height:2px;background:linear-gradient(90deg,#007aff 0px,#0778ff 5px,#6c69ff 42px,#d75aff 73px,#ff54ff 83px,#ff39c5 100px,#ff1f8e 124px,#ff085d 158px,#ff0049 179px)"></i><i style="left:103px;top:253px;width:176px;height:2px;background:linear-gradient(90deg,#0075ff 0px,#0673ff 5px,#6964ff 42px,#d255ff 73px,#ff4dfc 85px,#ff31c1 103px,#ff198c 127px,#ff045c 161px,#ff004e 175px)"></i><i style="left:103px;top:255px;width:170px;height:2px;background:linear-gradient(90deg,#0070ff 0px,#076eff 5px,#6a5fff 42px,#d14fff 73px,#ff47fe 85px,#ff2dc2 103px,#ff168d 127px,#ff015e 161px,#ff0055 169px)"></i><i style="left:102px;top:257px;width:166px;height:2px;background:linear-gradient(90deg,#006cff 0px,#066aff 5px,#6a5aff 43px,#d448ff 75px,#ff42ff 86px,#ff29c4 104px,#ff128f 128px,#ff005f 162px,#ff005c 165px)"></i><i style="left:102px;top:259px;width:160px;height:2px;background:linear-gradient(90deg,#0067ff 0px,#0965ff 6px,#6d54ff 44px,#d742ff 76px,#ff3bfd 87px,#ff23c2 105px,#ff0e8d 130px,#ff0064 159px)"></i><i style="left:101px;top:261px;width:155px;height:2px;background:linear-gradient(90deg,#0063ff 0px,#0561ff 5px,#6a4fff 44px,#d23dff 76px,#ff35fe 88px,#ff1fc4 106px,#ff0a8e 131px,#ff006c 154px)"></i><i style="left:101px;top:263px;width:150px;height:2px;background:linear-gradient(90deg,#005eff 0px,#095cff 6px,#6e4aff 45px,#d937ff 78px,#ff2ffc 89px,#ff19c0 108px,#ff058a 134px,#ff0074 149px)"></i><i style="left:100px;top:265px;width:145px;height:2px;background:linear-gradient(90deg,#005aff 0px,#0858ff 6px,#6b45ff 45px,#d432ff 78px,#ff2afd 90px,#ff15c1 109px,#ff028c 135px,#ff007e 144px)"></i><i style="left:100px;top:267px;width:140px;height:2px;background:linear-gradient(90deg,#0056ff 0px,#0953ff 6px,#6e40ff 46px,#d72cff 79px,#ff25ff 90px,#ff11c3 109px,#ff008d 135px,#ff0086 139px)"></i><i style="left:99px;top:269px;width:135px;height:2px;background:linear-gradient(90deg,#0052ff 0px,#074fff 6px,#6b3cff 46px,#d627ff 80px,#ff1efc 92px,#ff0cc2 111px,#ff0092 134px)"></i><i style="left:99px;top:271px;width:129px;height:2px;background:linear-gradient(90deg,#004eff 0px,#084bff 6px,#6c37ff 46px,#d522ff 80px,#ff1afe 92px,#ff08c3 111px,#ff009e 128px)"></i><i style="left:98px;top:273px;width:125px;height:2px;background:linear-gradient(90deg,#004aff 0px,#0747ff 6px,#6c33ff 47px,#d41eff 81px,#ff15ff 93px,#ff04c5 112px,#ff00a9 124px)"></i><i style="left:98px;top:275px;width:119px;height:2px;background:linear-gradient(90deg,#0046ff 0px,#0a43ff 7px,#6f2eff 48px,#da17ff 83px,#ff0ffd 94px,#ff00c1 114px,#ff00b7 118px)"></i><i style="left:97px;top:277px;width:115px;height:2px;background:linear-gradient(90deg,#0042ff 0px,#0740ff 6px,#6c2aff 48px,#d613ff 83px,#ff0afe 95px,#ff00c7 113px,#ff00c5 114px)"></i><i style="left:97px;top:279px;width:109px;height:2px;background:linear-gradient(90deg,#003eff 0px,#0a3bff 7px,#6f25ff 49px,#d80eff 84px,#ff06ff 95px,#ff00d6 108px)"></i><i style="left:96px;top:281px;width:104px;height:2px;background:linear-gradient(90deg,#003bff 0px,#0738ff 6px,#6a22ff 48px,#d40aff 84px,#ff01fd 97px,#ff00e9 103px)"></i><i style="left:96px;top:283px;width:99px;height:2px;background:linear-gradient(90deg,#0037ff 0px,#0a34ff 7px,#6f1dff 50px,#da05ff 86px,#ff00fe 97px,#ff00fb 98px)"></i><i style="left:95px;top:285px;width:94px;height:2px;background:linear-gradient(90deg,#0034ff 0px,#0731ff 6px,#6a1aff 49px,#d302ff 85px,#ed00ff 93px)"></i><i style="left:95px;top:287px;width:89px;height:2px;background:linear-gradient(90deg,#0030ff 0px,#0c2cff 8px,#7015ff 51px,#d800ff 87px,#dc00ff 88px)"></i><i style="left:94px;top:289px;width:84px;height:2px;background:linear-gradient(90deg,#002dff 0px,#072aff 6px,#6b12ff 50px,#c500ff 82px,#c800ff 83px)"></i><i style="left:94px;top:291px;width:78px;height:2px;background:linear-gradient(90deg,#0029ff 0px,#0c26ff 8px,#700dff 52px,#b500ff 77px)"></i><i style="left:93px;top:293px;width:74px;height:2px;background:linear-gradient(90deg,#0026ff 0px,#0923ff 7px,#6e0aff 52px,#a600ff 73px)"></i><i style="left:93px;top:295px;width:68px;height:2px;background:linear-gradient(90deg,#0023ff 0px,#0c1fff 8px,#7005ff 53px,#9500ff 67px)"></i><i style="left:92px;top:297px;width:64px;height:2px;background:linear-gradient(90deg,#0020ff 0px,#091dff 7px,#6e02ff 53px,#8800ff 63px)"></i><i style="left:92px;top:299px;width:58px;height:2px;background:linear-gradient(90deg,#001dff 0px,#0d18ff 9px,#7300ff 55px,#7800ff 57px)"></i><i style="left:91px;top:301px;width:53px;height:2px;background:linear-gradient(90deg,#001aff 0px,#0816ff 7px,#6a00ff 52px)"></i><i style="left:91px;top:303px;width:48px;height:2px;background:linear-gradient(90deg,#0017ff 0px,#0d12ff 9px,#5e00ff 47px)"></i><i style="left:90px;top:305px;width:43px;height:2px;background:linear-gradient(90deg,#0014ff 0px,#0810ff 7px,#5100ff 42px)"></i><i style="left:90px;top:307px;width:38px;height:2px;background:linear-gradient(90deg,#0011ff 0px,#0f0cff 10px,#4600ff 37px)"></i><i style="left:89px;top:309px;width:33px;height:2px;background:linear-gradient(90deg,#000eff 0px,#080aff 7px,#3a00ff 32px)"></i><i style="left:89px;top:311px;width:27px;height:2px;background:linear-gradient(90deg,#000bff 0px,#1005ff 11px,#2e00ff 26px)"></i><i style="left:88px;top:313px;width:23px;height:2px;background:linear-gradient(90deg,#0008ff 0px,#0a04ff 8px,#2400ff 22px)"></i><i style="left:88px;top:315px;width:17px;height:2px;background:linear-gradient(90deg,#0005ff 0px,#1000ff 11px,#1a00ff 16px)"></i><i style="left:87px;top:317px;width:13px;height:2px;background:linear-gradient(90deg,#0003ff 0px,#0a00ff 8px,#1100ff 12px)"></i><i style="left:87px;top:319px;width:7px;height:2px;background:linear-gradient(90deg,#0000ff 0px,#0700ff 6px)"></i></div>
<div class="g" style="left:1026.6px;top:30.7px;width:163.2px;height:123.9px;overflow:hidden"><i style="left:-0.6px;top:0.0px;width:165px;height:2.0px;background:linear-gradient(90deg,#88ffca 0px,#eeffc3 114px,#fffdbf 133px,#ffe0a8 164px)"></i><i style="left:-0.6px;top:2.0px;width:165px;height:2.0px;background:linear-gradient(90deg,#89ffcc 0px,#f0ffc4 114px,#fffdc2 131px,#ffdfa8 164px)"></i><i style="left:-0.6px;top:4.0px;width:165px;height:2.0px;background:linear-gradient(90deg,#8affcd 0px,#f1ffc6 113px,#fffcc3 130px,#ffdda9 164px)"></i><i style="left:-0.6px;top:6.0px;width:165px;height:2.0px;background:linear-gradient(90deg,#8bffcf 0px,#f1ffc8 112px,#fffdc5 128px,#ffdca9 164px)"></i><i style="left:-0.6px;top:8.0px;width:165px;height:2.0px;background:linear-gradient(90deg,#8cffd0 0px,#f3ffca 112px,#fffcc6 127px,#ffdaaa 164px)"></i><i style="left:-0.6px;top:10.0px;width:165px;height:2.0px;background:linear-gradient(90deg,#8dffd2 0px,#f3ffcb 111px,#fffcc9 125px,#ffd9aa 164px)"></i><i style="left:-0.6px;top:12.0px;width:165px;height:2.0px;background:linear-gradient(90deg,#8effd4 0px,#f5ffcd 111px,#fffcca 124px,#ffd8ab 164px)"></i><i style="left:-0.6px;top:14.0px;width:165px;height:2.0px;background:linear-gradient(90deg,#8fffd5 0px,#f5ffcf 110px,#fffccc 122px,#ffd6ab 164px)"></i><i style="left:-0.6px;top:16.0px;width:165px;height:2.0px;background:linear-gradient(90deg,#90ffd7 0px,#f7ffd1 110px,#fffccd 121px,#ffd5ab 164px)"></i><i style="left:-0.6px;top:18.0px;width:165px;height:2.0px;background:linear-gradient(90deg,#91ffd9 0px,#f8ffd3 109px,#fffcd0 119px,#ffd3ac 164px)"></i><i style="left:-0.6px;top:20.0px;width:165px;height:2.0px;background:linear-gradient(90deg,#92ffda 0px,#f9ffd5 109px,#fffad0 119px,#ffd2ac 164px)"></i><i style="left:-0.6px;top:22.0px;width:165px;height:2.0px;background:linear-gradient(90deg,#93ffdc 0px,#faffd7 108px,#fffbd2 117px,#ffd1ad 164px)"></i><i style="left:-0.6px;top:24.0px;width:165px;height:2.0px;background:linear-gradient(90deg,#94ffde 0px,#fbffd8 107px,#fff9d3 117px,#ffcfad 164px)"></i><i style="left:-0.6px;top:26.0px;width:165px;height:2.0px;background:linear-gradient(90deg,#95ffe0 0px,#fcffda 107px,#ffddbc 145px,#ffceae 164px)"></i><i style="left:-0.6px;top:28.0px;width:165px;height:2.0px;background:linear-gradient(90deg,#97ffe1 0px,#fdffdc 106px,#ffccae 164px)"></i><i style="left:-0.6px;top:30.0px;width:165px;height:2.0px;background:linear-gradient(90deg,#98ffe3 0px,#fffddd 108px,#ffcbae 164px)"></i><i style="left:-0.6px;top:32.0px;width:165px;height:2.0px;background:linear-gradient(90deg,#99ffe5 0px,#fffdde 107px,#ffcaaf 164px)"></i><i style="left:-0.6px;top:34.0px;width:165px;height:2.0px;background:linear-gradient(90deg,#9affe7 0px,#fffde0 105px,#ffc8af 164px)"></i><i style="left:-0.6px;top:36.0px;width:165px;height:2.0px;background:linear-gradient(90deg,#9bffe9 0px,#fffde3 103px,#ffc7b0 164px)"></i><i style="left:-0.6px;top:38.0px;width:165px;height:2.0px;background:linear-gradient(90deg,#9cffea 0px,#fffde4 102px,#ffc6b1 163px,#ffc5b0 164px)"></i><i style="left:-0.6px;top:40.0px;width:165px;height:2.0px;background:linear-gradient(90deg,#9dffec 0px,#fffde7 100px,#ffc7b3 160px,#ffc4b1 164px)"></i><i style="left:-0.6px;top:42.0px;width:165px;height:2.0px;background:linear-gradient(90deg,#9effee 0px,#fffce8 99px,#ffc6b5 159px,#ffc3b1 164px)"></i><i style="left:-0.6px;top:44.0px;width:165px;height:2.0px;background:linear-gradient(90deg,#9ffff0 0px,#fffdeb 97px,#ffc7b6 157px,#ffc1b1 164px)"></i><i style="left:-0.6px;top:46.0px;width:165px;height:2.0px;background:linear-gradient(90deg,#a1fff2 0px,#fffded 95px,#ffc7b8 155px,#ffc0b2 164px)"></i><i style="left:-0.6px;top:48.0px;width:165px;height:2.0px;background:linear-gradient(90deg,#a2fff4 0px,#fffdef 94px,#ffc6b9 154px,#ffbfb2 164px)"></i><i style="left:-0.6px;top:50.0px;width:165px;height:2.0px;background:linear-gradient(90deg,#a3fff6 0px,#fffdf1 92px,#ffc7bc 151px,#ffbdb3 164px)"></i><i style="left:-0.6px;top:52.0px;width:165px;height:2.0px;background:linear-gradient(90deg,#a4fff8 0px,#fffdf4 90px,#ffc7be 149px,#ffbcb3 164px)"></i><i style="left:-0.6px;top:54.0px;width:165px;height:2.0px;background:linear-gradient(90deg,#a5fffa 0px,#fffdf5 89px,#ffc6bf 148px,#ffbbb4 164px)"></i><i style="left:-0.6px;top:56.0px;width:165px;height:2.0px;background:linear-gradient(90deg,#a7fffc 0px,#fffdf8 87px,#ffc6c1 146px,#ffb9b4 164px)"></i><i style="left:-0.6px;top:58.0px;width:165px;height:2.0px;background:linear-gradient(90deg,#a8fffe 0px,#fffcfa 86px,#ffc7c3 144px,#ffb8b4 164px)"></i><i style="left:-0.6px;top:60.0px;width:165px;height:2.0px;background:linear-gradient(90deg,#a8feff 0px,#fffdfc 84px,#ffc7c5 142px,#ffb7b5 164px)"></i><i style="left:-0.6px;top:62.0px;width:165px;height:2.0px;background:linear-gradient(90deg,#a8fcff 0px,#fffbfd 84px,#ffc5c6 142px,#ffb5b5 164px)"></i><i style="left:-0.6px;top:64.0px;width:165px;height:2.0px;background:linear-gradient(90deg,#a8faff 0px,#fff9fd 84px,#ffc4c6 142px,#ffb4b6 164px)"></i><i style="left:-0.6px;top:66.0px;width:165px;height:2.0px;background:linear-gradient(90deg,#a8f8ff 0px,#fff7fd 84px,#ffc2c6 142px,#ffb3b6 164px)"></i><i style="left:-0.6px;top:68.0px;width:165px;height:2.0px;background:linear-gradient(90deg,#a8f6ff 0px,#fff5fd 85px,#ffc0c6 143px,#ffb1b6 164px)"></i><i style="left:-0.6px;top:70.0px;width:165px;height:2.0px;background:linear-gradient(90deg,#a8f4ff 0px,#fff3fd 85px,#ffbfc6 143px,#ffb0b7 164px)"></i><i style="left:-0.6px;top:72.0px;width:165px;height:2.0px;background:linear-gradient(90deg,#a8f2ff 0px,#fff0fc 86px,#ffbcc5 145px,#ffafb7 164px)"></i><i style="left:-0.6px;top:74.0px;width:165px;height:2.0px;background:linear-gradient(90deg,#a8f0ff 0px,#ffeefd 86px,#ffbbc6 145px,#ffadb8 164px)"></i><i style="left:-0.6px;top:76.0px;width:165px;height:2.0px;background:linear-gradient(90deg,#a8eeff 0px,#ffecfd 86px,#ffb9c6 145px,#ffacb8 164px)"></i><i style="left:-0.6px;top:78.0px;width:165px;height:2.0px;background:linear-gradient(90deg,#a7ecff 0px,#ffeafd 87px,#ffb7c6 146px,#ffabb8 164px)"></i><i style="left:-0.6px;top:80.0px;width:165px;height:2.0px;background:linear-gradient(90deg,#a7eaff 0px,#ffe8fd 87px,#ffb6c6 146px,#ffa9b9 164px)"></i><i style="left:-0.6px;top:82.0px;width:165px;height:2.0px;background:linear-gradient(90deg,#a7e8ff 0px,#ffe6fd 87px,#ffb4c7 146px,#ffa8b9 164px)"></i><i style="left:-0.6px;top:84.0px;width:165px;height:2.0px;background:linear-gradient(90deg,#a7e6ff 0px,#ffe3fd 88px,#ffb1c5 148px,#ffa7ba 164px)"></i><i style="left:-0.6px;top:86.0px;width:165px;height:2.0px;background:linear-gradient(90deg,#a7e4ff 0px,#ffe2fd 88px,#ffb0c6 148px,#ffa6ba 164px)"></i><i style="left:-0.6px;top:88.0px;width:165px;height:2.0px;background:linear-gradient(90deg,#a7e2ff 0px,#ffe0fd 88px,#ffafc6 148px,#ffa4bb 164px)"></i><i style="left:-0.6px;top:90.0px;width:165px;height:2.0px;background:linear-gradient(90deg,#a7e0ff 0px,#ffddfd 89px,#ffadc6 149px,#ffa3bb 164px)"></i><i style="left:-0.6px;top:92.0px;width:165px;height:2.0px;background:linear-gradient(90deg,#a7dfff 0px,#ffdcfd 89px,#ffabc6 149px,#ffa2bb 164px)"></i><i style="left:-0.6px;top:94.0px;width:165px;height:2.0px;background:linear-gradient(90deg,#a7ddff 0px,#ffdafd 89px,#ffaac7 149px,#ffa0bc 164px)"></i><i style="left:-0.6px;top:96.0px;width:165px;height:2.0px;background:linear-gradient(90deg,#a6dbff 0px,#ffd7fd 90px,#ffa7c6 151px,#ff9fbc 164px)"></i><i style="left:-0.6px;top:98.0px;width:165px;height:2.0px;background:linear-gradient(90deg,#a6d9ff 0px,#ffd6fd 90px,#ffa6c6 151px,#ff9ebc 164px)"></i><i style="left:-0.6px;top:100.0px;width:165px;height:2.0px;background:linear-gradient(90deg,#a6d7ff 0px,#ffd3fc 91px,#ffa4c6 152px,#ff9dbd 164px)"></i><i style="left:-0.6px;top:102.0px;width:165px;height:2.0px;background:linear-gradient(90deg,#a6d5ff 0px,#ffd1fd 91px,#ffa3c6 152px,#ff9bbd 164px)"></i><i style="left:-0.6px;top:104.0px;width:165px;height:2.0px;background:linear-gradient(90deg,#a6d4ff 0px,#ffd0fd 91px,#ffa1c6 152px,#ff9abe 164px)"></i><i style="left:-0.6px;top:106.0px;width:165px;height:2.0px;background:linear-gradient(90deg,#a6d2ff 0px,#ffcdfd 92px,#ff9fc5 154px,#ff99be 164px)"></i><i style="left:-0.6px;top:108.0px;width:165px;height:2.0px;background:linear-gradient(90deg,#a6d0ff 0px,#ffccfd 92px,#ff9ec6 154px,#ff98be 164px)"></i><i style="left:-0.6px;top:110.0px;width:165px;height:2.0px;background:linear-gradient(90deg,#a6ceff 0px,#ffcafd 92px,#ff9cc6 154px,#ff96bf 164px)"></i><i style="left:-0.6px;top:112.0px;width:165px;height:2.0px;background:linear-gradient(90deg,#a6ccff 0px,#ffc8fd 93px,#ff9ac6 155px,#ff95bf 164px)"></i><i style="left:-0.6px;top:114.0px;width:165px;height:2.0px;background:linear-gradient(90deg,#a6cbff 0px,#ffc6fd 93px,#ff99c6 155px,#ff94c0 164px)"></i><i style="left:-0.6px;top:116.0px;width:165px;height:2.0px;background:linear-gradient(90deg,#a5c9ff 0px,#ffc4fd 93px,#ff98c7 155px,#ff93c0 164px)"></i><i style="left:-0.6px;top:118.0px;width:165px;height:2.0px;background:linear-gradient(90deg,#a5c7ff 0px,#ffc2fd 94px,#ff96c6 156px,#ff91c0 164px)"></i><i style="left:-0.6px;top:120.0px;width:165px;height:2.0px;background:linear-gradient(90deg,#a5c5ff 0px,#ffc0fd 94px,#ff94c6 157px,#ff90c1 164px)"></i><i style="left:-0.6px;top:122.0px;width:165px;height:1.9px;background:linear-gradient(90deg,#a5c4ff 0px,#ffbffd 94px,#ff93c6 157px,#ff8fc1 164px)"></i></div>
<svg width="1200" height="542" viewBox="0 0 1200 542">
<ellipse cx="889.3" cy="246.7" rx="3.3" ry="2.5" fill="#ffffff" stroke="#151515" stroke-width="1"/>
<ellipse cx="1101.7" cy="240.0" rx="3.3" ry="2.5" fill="#ff1010" stroke="#151515" stroke-width="1"/>
<ellipse cx="876.6" cy="94.1" rx="3.3" ry="2.5" fill="#20e020" stroke="#151515" stroke-width="1"/>
<ellipse cx="810.8" cy="345.0" rx="3.3" ry="2.5" fill="#2020ff" stroke="#151515" stroke-width="1"/>
<ellipse cx="836.8" cy="245.3" rx="3.3" ry="2.5" fill="#40f0f0" stroke="#151515" stroke-width="1"/>
<ellipse cx="901.1" cy="312.7" rx="3.3" ry="2.5" fill="#f020f0" stroke="#151515" stroke-width="1"/>
<ellipse cx="963.6" cy="149.9" rx="3.3" ry="2.5" fill="#f0f040" stroke="#151515" stroke-width="1"/>
<rect x="894.6" y="231.4" width="10.8" height="8.6" fill="none" stroke="#262626" stroke-width="1.6"/>
<rect x="1098.5" y="234.6" width="10.4" height="9.4" fill="none" stroke="#e6e6e6" stroke-width="1.1"/>
<rect x="868.3" y="85.2" width="10.4" height="9.4" fill="none" stroke="#e6e6e6" stroke-width="1.1"/>
<rect x="804.6" y="339.6" width="10.4" height="9.4" fill="none" stroke="#e6e6e6" stroke-width="1.1"/>
<rect x="832.2" y="229.6" width="10.4" height="9.4" fill="none" stroke="#e6e6e6" stroke-width="1.1"/>
<rect x="907.2" y="302.7" width="10.4" height="9.4" fill="none" stroke="#e6e6e6" stroke-width="1.1"/>
<rect x="963.7" y="147.6" width="10.4" height="9.4" fill="none" stroke="#e6e6e6" stroke-width="1.1"/>
<rect x="1103.2" y="87.2" width="10" height="10" fill="none" stroke="#222" stroke-width="1.6"/>
<circle cx="1059" cy="144.4" r="3" fill="#fff" stroke="#111" stroke-width="1"/>
<rect x="1026.6" y="30.7" width="163.20000000000005" height="123.89999999999999" fill="none" stroke="#8a8a8a" stroke-width="1.2"/>
<g opacity="0.92"><path fill-rule="evenodd" fill="#f8830f" d="M1014.5,498 H1032 Q1035.5,498 1035.5,501.5 V518.3 Q1035.5,521.8 1032,521.8 H1014.5 Q1011,521.8 1011,518.3 V501.5 Q1011,498 1014.5,498 Z M1018.5,501 L1022.8,501 L1031,510 L1022.8,519.5 L1018.5,519.5 L1026.5,510 Z"/></g>
<text x="1040.5" y="518.4" font-size="26.16" fill="#161616" fill-opacity="0.72" textLength="137.5" lengthAdjust="spacingAndGlyphs" style="font-weight:normal">Soomal.com</text>
</svg>
</body></html>
